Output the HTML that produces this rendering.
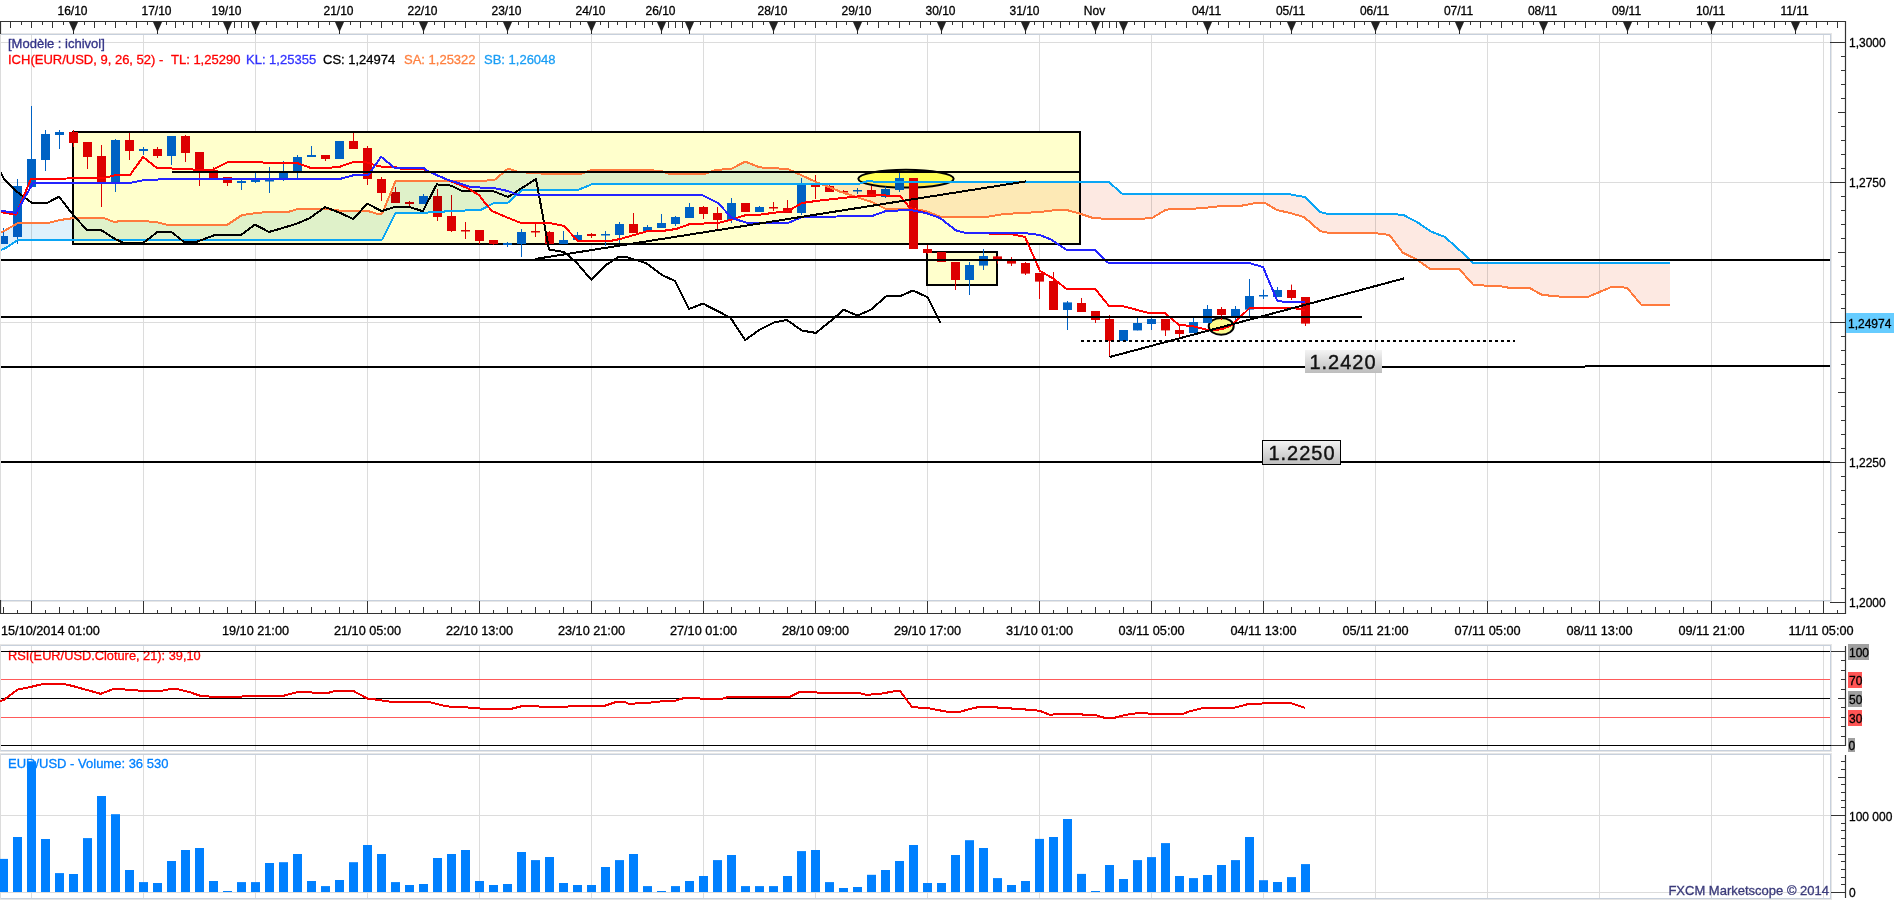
<!DOCTYPE html>
<html><head><meta charset="utf-8"><style>html,body{margin:0;padding:0;background:#fff;width:1903px;height:900px;overflow:hidden;position:relative}</style></head><body>
<svg width="1903" height="900" viewBox="0 0 1903 900" style="position:absolute;left:0;top:0;font-family:'Liberation Sans', sans-serif">
<rect x="0" y="0" width="1903" height="900" fill="#ffffff"/>
<line x1="31.5" y1="35" x2="31.5" y2="600" stroke="#dcdcdc" stroke-width="1"/>
<line x1="143.5" y1="35" x2="143.5" y2="600" stroke="#dcdcdc" stroke-width="1"/>
<line x1="255.5" y1="35" x2="255.5" y2="600" stroke="#dcdcdc" stroke-width="1"/>
<line x1="367.5" y1="35" x2="367.5" y2="600" stroke="#dcdcdc" stroke-width="1"/>
<line x1="479.5" y1="35" x2="479.5" y2="600" stroke="#dcdcdc" stroke-width="1"/>
<line x1="591.5" y1="35" x2="591.5" y2="600" stroke="#dcdcdc" stroke-width="1"/>
<line x1="703.5" y1="35" x2="703.5" y2="600" stroke="#dcdcdc" stroke-width="1"/>
<line x1="815.5" y1="35" x2="815.5" y2="600" stroke="#dcdcdc" stroke-width="1"/>
<line x1="927.5" y1="35" x2="927.5" y2="600" stroke="#dcdcdc" stroke-width="1"/>
<line x1="1039.5" y1="35" x2="1039.5" y2="600" stroke="#dcdcdc" stroke-width="1"/>
<line x1="1151.5" y1="35" x2="1151.5" y2="600" stroke="#dcdcdc" stroke-width="1"/>
<line x1="1263.5" y1="35" x2="1263.5" y2="600" stroke="#dcdcdc" stroke-width="1"/>
<line x1="1375.5" y1="35" x2="1375.5" y2="600" stroke="#dcdcdc" stroke-width="1"/>
<line x1="1487.5" y1="35" x2="1487.5" y2="600" stroke="#dcdcdc" stroke-width="1"/>
<line x1="1599.5" y1="35" x2="1599.5" y2="600" stroke="#dcdcdc" stroke-width="1"/>
<line x1="1711.5" y1="35" x2="1711.5" y2="600" stroke="#dcdcdc" stroke-width="1"/>
<line x1="1823.5" y1="35" x2="1823.5" y2="600" stroke="#dcdcdc" stroke-width="1"/>
<line x1="31.5" y1="646" x2="31.5" y2="750" stroke="#dcdcdc" stroke-width="1"/>
<line x1="143.5" y1="646" x2="143.5" y2="750" stroke="#dcdcdc" stroke-width="1"/>
<line x1="255.5" y1="646" x2="255.5" y2="750" stroke="#dcdcdc" stroke-width="1"/>
<line x1="367.5" y1="646" x2="367.5" y2="750" stroke="#dcdcdc" stroke-width="1"/>
<line x1="479.5" y1="646" x2="479.5" y2="750" stroke="#dcdcdc" stroke-width="1"/>
<line x1="591.5" y1="646" x2="591.5" y2="750" stroke="#dcdcdc" stroke-width="1"/>
<line x1="703.5" y1="646" x2="703.5" y2="750" stroke="#dcdcdc" stroke-width="1"/>
<line x1="815.5" y1="646" x2="815.5" y2="750" stroke="#dcdcdc" stroke-width="1"/>
<line x1="927.5" y1="646" x2="927.5" y2="750" stroke="#dcdcdc" stroke-width="1"/>
<line x1="1039.5" y1="646" x2="1039.5" y2="750" stroke="#dcdcdc" stroke-width="1"/>
<line x1="1151.5" y1="646" x2="1151.5" y2="750" stroke="#dcdcdc" stroke-width="1"/>
<line x1="1263.5" y1="646" x2="1263.5" y2="750" stroke="#dcdcdc" stroke-width="1"/>
<line x1="1375.5" y1="646" x2="1375.5" y2="750" stroke="#dcdcdc" stroke-width="1"/>
<line x1="1487.5" y1="646" x2="1487.5" y2="750" stroke="#dcdcdc" stroke-width="1"/>
<line x1="1599.5" y1="646" x2="1599.5" y2="750" stroke="#dcdcdc" stroke-width="1"/>
<line x1="1711.5" y1="646" x2="1711.5" y2="750" stroke="#dcdcdc" stroke-width="1"/>
<line x1="1823.5" y1="646" x2="1823.5" y2="750" stroke="#dcdcdc" stroke-width="1"/>
<line x1="31.5" y1="755" x2="31.5" y2="898" stroke="#dcdcdc" stroke-width="1"/>
<line x1="143.5" y1="755" x2="143.5" y2="898" stroke="#dcdcdc" stroke-width="1"/>
<line x1="255.5" y1="755" x2="255.5" y2="898" stroke="#dcdcdc" stroke-width="1"/>
<line x1="367.5" y1="755" x2="367.5" y2="898" stroke="#dcdcdc" stroke-width="1"/>
<line x1="479.5" y1="755" x2="479.5" y2="898" stroke="#dcdcdc" stroke-width="1"/>
<line x1="591.5" y1="755" x2="591.5" y2="898" stroke="#dcdcdc" stroke-width="1"/>
<line x1="703.5" y1="755" x2="703.5" y2="898" stroke="#dcdcdc" stroke-width="1"/>
<line x1="815.5" y1="755" x2="815.5" y2="898" stroke="#dcdcdc" stroke-width="1"/>
<line x1="927.5" y1="755" x2="927.5" y2="898" stroke="#dcdcdc" stroke-width="1"/>
<line x1="1039.5" y1="755" x2="1039.5" y2="898" stroke="#dcdcdc" stroke-width="1"/>
<line x1="1151.5" y1="755" x2="1151.5" y2="898" stroke="#dcdcdc" stroke-width="1"/>
<line x1="1263.5" y1="755" x2="1263.5" y2="898" stroke="#dcdcdc" stroke-width="1"/>
<line x1="1375.5" y1="755" x2="1375.5" y2="898" stroke="#dcdcdc" stroke-width="1"/>
<line x1="1487.5" y1="755" x2="1487.5" y2="898" stroke="#dcdcdc" stroke-width="1"/>
<line x1="1599.5" y1="755" x2="1599.5" y2="898" stroke="#dcdcdc" stroke-width="1"/>
<line x1="1711.5" y1="755" x2="1711.5" y2="898" stroke="#dcdcdc" stroke-width="1"/>
<line x1="1823.5" y1="755" x2="1823.5" y2="898" stroke="#dcdcdc" stroke-width="1"/>
<line x1="1" y1="42.5" x2="1830" y2="42.5" stroke="#dcdcdc" stroke-width="1"/>
<line x1="1" y1="182.5" x2="1830" y2="182.5" stroke="#dcdcdc" stroke-width="1"/>
<line x1="1" y1="322.5" x2="1830" y2="322.5" stroke="#dcdcdc" stroke-width="1"/>
<line x1="1" y1="462.5" x2="1830" y2="462.5" stroke="#dcdcdc" stroke-width="1"/>
<line x1="1" y1="815.5" x2="1830" y2="815.5" stroke="#dcdcdc" stroke-width="1"/>
<rect x="73" y="132" width="1007" height="112" fill="#ffffcc"/>
<rect x="927" y="252" width="70" height="33" fill="#ffffcc"/>
<rect x="73" y="132" width="1007" height="112" fill="none" stroke="#000" stroke-width="2"/>
<rect x="927" y="252" width="70" height="33" fill="none" stroke="#000" stroke-width="2"/>
<ellipse cx="906" cy="178.7" rx="47.7" ry="8.9" fill="#ffff55" stroke="#000" stroke-width="2"/>
<ellipse cx="1221.2" cy="326.3" rx="12.5" ry="8.4" fill="#fafa8c" stroke="#000" stroke-width="2"/>
<rect x="3" y="228.0" width="1" height="16.0" fill="#0062c4"/>
<rect x="-1" y="236.0" width="9" height="8.0" fill="#0062c4"/>
<rect x="17" y="179.0" width="1" height="65.0" fill="#0062c4"/>
<rect x="13" y="186.0" width="9" height="51.0" fill="#0062c4"/>
<rect x="31" y="106.0" width="1" height="81.0" fill="#0062c4"/>
<rect x="27" y="159.0" width="9" height="28.0" fill="#0062c4"/>
<rect x="45" y="130.0" width="1" height="41.0" fill="#0062c4"/>
<rect x="41" y="134.0" width="9" height="26.0" fill="#0062c4"/>
<rect x="59" y="130.0" width="1" height="19.0" fill="#0062c4"/>
<rect x="55" y="132.0" width="9" height="3.0" fill="#0062c4"/>
<rect x="73" y="130.0" width="1" height="17.0" fill="#dd0000"/>
<rect x="69" y="132.0" width="9" height="11.0" fill="#dd0000"/>
<rect x="87" y="142.0" width="1" height="27.0" fill="#dd0000"/>
<rect x="83" y="142.0" width="9" height="15.0" fill="#dd0000"/>
<rect x="101" y="145.0" width="1" height="62.0" fill="#dd0000"/>
<rect x="97" y="156.0" width="9" height="27.0" fill="#dd0000"/>
<rect x="115" y="139.0" width="1" height="53.0" fill="#0062c4"/>
<rect x="111" y="140.0" width="9" height="43.0" fill="#0062c4"/>
<rect x="129" y="133.0" width="1" height="27.0" fill="#dd0000"/>
<rect x="125" y="140.0" width="9" height="11.0" fill="#dd0000"/>
<rect x="143" y="147.0" width="1" height="8.0" fill="#0062c4"/>
<rect x="139" y="149.0" width="9" height="2.0" fill="#0062c4"/>
<rect x="157" y="147.0" width="1" height="11.0" fill="#dd0000"/>
<rect x="153" y="149.0" width="9" height="7.0" fill="#dd0000"/>
<rect x="171" y="136.0" width="1" height="29.0" fill="#0062c4"/>
<rect x="167" y="136.0" width="9" height="20.0" fill="#0062c4"/>
<rect x="185" y="135.0" width="1" height="27.0" fill="#dd0000"/>
<rect x="181" y="136.0" width="9" height="17.0" fill="#dd0000"/>
<rect x="199" y="152.0" width="1" height="34.0" fill="#dd0000"/>
<rect x="195" y="152.0" width="9" height="19.0" fill="#dd0000"/>
<rect x="213" y="167.0" width="1" height="11.0" fill="#dd0000"/>
<rect x="209" y="170.0" width="9" height="8.0" fill="#dd0000"/>
<rect x="227" y="177.0" width="1" height="9.0" fill="#dd0000"/>
<rect x="223" y="177.0" width="9" height="6.0" fill="#dd0000"/>
<rect x="241" y="179.0" width="1" height="11.0" fill="#0062c4"/>
<rect x="237" y="181.0" width="9" height="2.0" fill="#0062c4"/>
<rect x="255" y="173.0" width="1" height="10.0" fill="#0062c4"/>
<rect x="251" y="180.0" width="9" height="2.0" fill="#0062c4"/>
<rect x="269" y="167.0" width="1" height="26.0" fill="#0062c4"/>
<rect x="265" y="180.0" width="9" height="1.5" fill="#0062c4"/>
<rect x="283" y="161.0" width="1" height="20.0" fill="#0062c4"/>
<rect x="279" y="173.0" width="9" height="6.0" fill="#0062c4"/>
<rect x="297" y="155.0" width="1" height="23.0" fill="#0062c4"/>
<rect x="293" y="157.0" width="9" height="14.0" fill="#0062c4"/>
<rect x="311" y="146.0" width="1" height="11.0" fill="#0062c4"/>
<rect x="307" y="155.0" width="9" height="2.0" fill="#0062c4"/>
<rect x="325" y="155.0" width="1" height="6.0" fill="#dd0000"/>
<rect x="321" y="155.0" width="9" height="4.0" fill="#dd0000"/>
<rect x="339" y="141.0" width="1" height="18.0" fill="#0062c4"/>
<rect x="335" y="141.0" width="9" height="18.0" fill="#0062c4"/>
<rect x="353" y="133.0" width="1" height="16.0" fill="#dd0000"/>
<rect x="349" y="141.0" width="9" height="8.0" fill="#dd0000"/>
<rect x="367" y="146.0" width="1" height="39.0" fill="#dd0000"/>
<rect x="363" y="148.0" width="9" height="31.0" fill="#dd0000"/>
<rect x="381" y="177.0" width="1" height="24.0" fill="#dd0000"/>
<rect x="377" y="179.0" width="9" height="14.0" fill="#dd0000"/>
<rect x="395" y="187.0" width="1" height="16.0" fill="#dd0000"/>
<rect x="391" y="192.0" width="9" height="11.0" fill="#dd0000"/>
<rect x="409" y="201.0" width="1" height="5.0" fill="#dd0000"/>
<rect x="405" y="202.0" width="9" height="2.0" fill="#dd0000"/>
<rect x="423" y="194.0" width="1" height="10.0" fill="#0062c4"/>
<rect x="419" y="196.0" width="9" height="8.0" fill="#0062c4"/>
<rect x="437" y="189.0" width="1" height="32.0" fill="#dd0000"/>
<rect x="433" y="196.0" width="9" height="21.0" fill="#dd0000"/>
<rect x="451" y="195.0" width="1" height="37.0" fill="#dd0000"/>
<rect x="447" y="216.0" width="9" height="15.0" fill="#dd0000"/>
<rect x="465" y="222.0" width="1" height="17.0" fill="#dd0000"/>
<rect x="461" y="230.0" width="9" height="1.5" fill="#dd0000"/>
<rect x="479" y="230.0" width="1" height="14.0" fill="#dd0000"/>
<rect x="475" y="230.0" width="9" height="11.0" fill="#dd0000"/>
<rect x="493" y="240.0" width="1" height="5.0" fill="#dd0000"/>
<rect x="489" y="240.0" width="9" height="4.0" fill="#dd0000"/>
<rect x="507" y="242.0" width="1" height="5.0" fill="#0062c4"/>
<rect x="503" y="243.0" width="9" height="2.0" fill="#0062c4"/>
<rect x="521" y="229.0" width="1" height="28.0" fill="#0062c4"/>
<rect x="517" y="232.0" width="9" height="12.0" fill="#0062c4"/>
<rect x="535" y="224.0" width="1" height="13.0" fill="#dd0000"/>
<rect x="531" y="231.0" width="9" height="1.5" fill="#dd0000"/>
<rect x="549" y="231.0" width="1" height="13.0" fill="#dd0000"/>
<rect x="545" y="232.0" width="9" height="12.0" fill="#dd0000"/>
<rect x="563" y="231.0" width="1" height="13.0" fill="#0062c4"/>
<rect x="559" y="240.0" width="9" height="4.0" fill="#0062c4"/>
<rect x="577" y="232.0" width="1" height="8.0" fill="#0062c4"/>
<rect x="573" y="235.0" width="9" height="5.0" fill="#0062c4"/>
<rect x="591" y="233.0" width="1" height="5.0" fill="#dd0000"/>
<rect x="587" y="234.0" width="9" height="2.0" fill="#dd0000"/>
<rect x="605" y="231.0" width="1" height="15.0" fill="#0062c4"/>
<rect x="601" y="234.0" width="9" height="1.5" fill="#0062c4"/>
<rect x="619" y="222.0" width="1" height="21.0" fill="#0062c4"/>
<rect x="615" y="224.0" width="9" height="11.0" fill="#0062c4"/>
<rect x="633" y="213.0" width="1" height="20.0" fill="#dd0000"/>
<rect x="629" y="224.0" width="9" height="9.0" fill="#dd0000"/>
<rect x="647" y="225.0" width="1" height="7.0" fill="#0062c4"/>
<rect x="643" y="227.0" width="9" height="5.0" fill="#0062c4"/>
<rect x="661" y="214.0" width="1" height="14.0" fill="#0062c4"/>
<rect x="657" y="223.0" width="9" height="5.0" fill="#0062c4"/>
<rect x="675" y="216.0" width="1" height="10.0" fill="#0062c4"/>
<rect x="671" y="217.0" width="9" height="7.0" fill="#0062c4"/>
<rect x="689" y="203.0" width="1" height="15.0" fill="#0062c4"/>
<rect x="685" y="207.0" width="9" height="11.0" fill="#0062c4"/>
<rect x="703" y="206.0" width="1" height="13.0" fill="#dd0000"/>
<rect x="699" y="207.0" width="9" height="7.0" fill="#dd0000"/>
<rect x="717" y="207.0" width="1" height="22.0" fill="#dd0000"/>
<rect x="713" y="213.0" width="9" height="7.0" fill="#dd0000"/>
<rect x="731" y="198.0" width="1" height="25.0" fill="#0062c4"/>
<rect x="727" y="203.0" width="9" height="17.0" fill="#0062c4"/>
<rect x="745" y="203.0" width="1" height="9.0" fill="#dd0000"/>
<rect x="741" y="203.0" width="9" height="9.0" fill="#dd0000"/>
<rect x="759" y="206.0" width="1" height="6.0" fill="#0062c4"/>
<rect x="755" y="207.0" width="9" height="5.0" fill="#0062c4"/>
<rect x="773" y="202.0" width="1" height="9.0" fill="#dd0000"/>
<rect x="769" y="207.0" width="9" height="1.5" fill="#dd0000"/>
<rect x="787" y="200.0" width="1" height="13.0" fill="#dd0000"/>
<rect x="783" y="208.0" width="9" height="5.0" fill="#dd0000"/>
<rect x="801" y="178.0" width="1" height="37.0" fill="#0062c4"/>
<rect x="797" y="185.0" width="9" height="28.0" fill="#0062c4"/>
<rect x="815" y="175.0" width="1" height="24.0" fill="#dd0000"/>
<rect x="811" y="185.0" width="9" height="2.0" fill="#dd0000"/>
<rect x="829" y="185.0" width="1" height="7.0" fill="#dd0000"/>
<rect x="825" y="186.0" width="9" height="6.0" fill="#dd0000"/>
<rect x="843" y="190.0" width="1" height="3.0" fill="#dd0000"/>
<rect x="839" y="191.0" width="9" height="1.5" fill="#dd0000"/>
<rect x="857" y="188.0" width="1" height="6.0" fill="#0062c4"/>
<rect x="853" y="190.0" width="9" height="1.5" fill="#0062c4"/>
<rect x="871" y="186.0" width="1" height="11.0" fill="#dd0000"/>
<rect x="867" y="190.0" width="9" height="7.0" fill="#dd0000"/>
<rect x="885" y="186.5" width="1" height="11.5" fill="#0062c4"/>
<rect x="881" y="189.0" width="9" height="8.0" fill="#0062c4"/>
<rect x="899" y="172.0" width="1" height="20.0" fill="#0062c4"/>
<rect x="895" y="178.0" width="9" height="12.0" fill="#0062c4"/>
<rect x="913" y="178.0" width="1" height="71.0" fill="#dd0000"/>
<rect x="909" y="178.0" width="9" height="71.0" fill="#dd0000"/>
<rect x="927" y="245.0" width="1" height="9.0" fill="#dd0000"/>
<rect x="923" y="249.0" width="9" height="4.0" fill="#dd0000"/>
<rect x="941" y="252.0" width="1" height="10.0" fill="#dd0000"/>
<rect x="937" y="252.0" width="9" height="10.0" fill="#dd0000"/>
<rect x="955" y="262.0" width="1" height="28.0" fill="#dd0000"/>
<rect x="951" y="262.0" width="9" height="18.0" fill="#dd0000"/>
<rect x="969" y="262.0" width="1" height="33.0" fill="#0062c4"/>
<rect x="965" y="265.0" width="9" height="15.0" fill="#0062c4"/>
<rect x="983" y="249.0" width="1" height="21.0" fill="#0062c4"/>
<rect x="979" y="256.0" width="9" height="9.600000000000023" fill="#0062c4"/>
<rect x="997" y="256.0" width="1" height="7.600000000000023" fill="#dd0000"/>
<rect x="993" y="256.4" width="9" height="3.6000000000000227" fill="#dd0000"/>
<rect x="1011" y="257.0" width="1" height="9.0" fill="#dd0000"/>
<rect x="1007" y="261.0" width="9" height="2.6000000000000227" fill="#dd0000"/>
<rect x="1025" y="262.0" width="1" height="13.0" fill="#dd0000"/>
<rect x="1021" y="263.0" width="9" height="10.600000000000023" fill="#dd0000"/>
<rect x="1039" y="273.0" width="1" height="26.0" fill="#dd0000"/>
<rect x="1035" y="273.0" width="9" height="8.600000000000023" fill="#dd0000"/>
<rect x="1053" y="272.0" width="1" height="38.0" fill="#dd0000"/>
<rect x="1049" y="281.0" width="9" height="29.0" fill="#dd0000"/>
<rect x="1067" y="301.0" width="1" height="29.0" fill="#0062c4"/>
<rect x="1063" y="302.4" width="9" height="7.600000000000023" fill="#0062c4"/>
<rect x="1081" y="298.0" width="1" height="14.0" fill="#dd0000"/>
<rect x="1077" y="303.0" width="9" height="9.0" fill="#dd0000"/>
<rect x="1095" y="311.0" width="1" height="12.0" fill="#dd0000"/>
<rect x="1091" y="311.0" width="9" height="9.0" fill="#dd0000"/>
<rect x="1109" y="315.0" width="1" height="42.0" fill="#dd0000"/>
<rect x="1105" y="319.0" width="9" height="22.0" fill="#dd0000"/>
<rect x="1123" y="330.0" width="1" height="11.0" fill="#0062c4"/>
<rect x="1119" y="330.0" width="9" height="11.0" fill="#0062c4"/>
<rect x="1137" y="318.0" width="1" height="12.399999999999977" fill="#0062c4"/>
<rect x="1133" y="323.0" width="9" height="7.399999999999977" fill="#0062c4"/>
<rect x="1151" y="317.0" width="1" height="13.0" fill="#0062c4"/>
<rect x="1147" y="319.0" width="9" height="5.0" fill="#0062c4"/>
<rect x="1165" y="319.0" width="1" height="17.0" fill="#dd0000"/>
<rect x="1161" y="319.0" width="9" height="11.399999999999977" fill="#dd0000"/>
<rect x="1179" y="324.0" width="1" height="13.0" fill="#dd0000"/>
<rect x="1175" y="330.0" width="9" height="4.0" fill="#dd0000"/>
<rect x="1193" y="318.0" width="1" height="15.0" fill="#0062c4"/>
<rect x="1189" y="322.0" width="9" height="11.0" fill="#0062c4"/>
<rect x="1207" y="305.0" width="1" height="18.0" fill="#0062c4"/>
<rect x="1203" y="309.0" width="9" height="14.0" fill="#0062c4"/>
<rect x="1221" y="307.0" width="1" height="13.0" fill="#dd0000"/>
<rect x="1217" y="309.0" width="9" height="6.0" fill="#dd0000"/>
<rect x="1235" y="306.0" width="1" height="17.0" fill="#0062c4"/>
<rect x="1231" y="309.0" width="9" height="7.0" fill="#0062c4"/>
<rect x="1249" y="279.0" width="1" height="38.0" fill="#0062c4"/>
<rect x="1245" y="296.0" width="9" height="13.600000000000023" fill="#0062c4"/>
<rect x="1263" y="289.6" width="1" height="9.399999999999977" fill="#0062c4"/>
<rect x="1259" y="295.0" width="9" height="1.5" fill="#0062c4"/>
<rect x="1277" y="287.0" width="1" height="10.0" fill="#0062c4"/>
<rect x="1273" y="290.0" width="9" height="7.0" fill="#0062c4"/>
<rect x="1291" y="284.6" width="1" height="15.399999999999977" fill="#dd0000"/>
<rect x="1287" y="290.0" width="9" height="8.0" fill="#dd0000"/>
<rect x="1305" y="297.0" width="1" height="29.0" fill="#dd0000"/>
<rect x="1301" y="297.0" width="9" height="26.600000000000023" fill="#dd0000"/>
<polygon points="0.0,233.0 0.5,232.8 1.0,232.5 1.5,232.2 2.0,232.0 2.5,231.8 3.0,231.5 3.5,231.2 4.0,231.0 5.8,230.0 7.5,229.0 9.2,228.0 11.0,227.0 12.8,226.0 14.5,225.0 16.2,224.0 18.0,223.0 22.0,222.9 26.0,222.9 30.0,222.8 34.0,222.8 38.0,222.8 42.0,222.7 46.0,222.7 50.0,222.6 51.2,222.3 52.5,221.9 53.8,221.6 55.0,221.3 56.2,221.0 57.5,220.7 58.8,220.3 60.0,220.0 61.8,219.8 63.5,219.5 65.2,219.2 67.0,219.0 68.8,218.8 70.5,218.5 72.2,218.2 74.0,218.0 77.8,218.0 81.5,218.0 85.2,218.0 89.0,218.0 92.8,218.0 96.5,218.0 100.2,218.0 104.0,218.0 105.2,218.5 106.5,219.0 107.8,219.5 109.0,220.0 110.2,220.5 111.5,221.0 112.8,221.5 114.0,222.0 115.2,221.8 116.5,221.7 117.8,221.5 119.0,221.3 120.2,221.1 121.5,220.9 122.8,220.8 124.0,220.6 126.2,220.7 128.5,220.7 130.8,220.8 133.0,220.8 135.2,220.8 137.5,220.9 139.8,220.9 142.0,221.0 143.8,221.1 145.5,221.2 147.2,221.4 149.0,221.5 150.8,221.6 152.5,221.8 154.2,221.9 156.0,222.0 157.5,222.4 159.0,222.8 160.5,223.1 162.0,223.5 163.5,223.9 165.0,224.2 166.5,224.6 168.0,225.0 175.4,225.0 182.8,225.0 190.1,225.0 197.5,225.0 204.9,225.0 212.2,225.0 219.6,225.0 227.0,225.0 228.9,223.8 230.8,222.5 232.6,221.2 234.5,220.0 236.4,218.8 238.2,217.5 240.1,216.2 242.0,215.0 243.6,214.8 245.2,214.6 246.9,214.4 248.5,214.2 250.1,213.9 251.8,213.7 253.4,213.5 255.0,213.3 256.9,213.1 258.8,212.9 260.6,212.7 262.5,212.5 264.4,212.3 266.2,212.1 268.1,211.9 270.0,211.7 272.4,211.7 274.8,211.7 277.1,211.7 279.5,211.7 281.9,211.7 284.2,211.7 286.6,211.7 289.0,211.7 290.2,211.3 291.5,210.9 292.8,210.6 294.0,210.2 295.2,209.8 296.5,209.4 297.8,209.1 299.0,208.7 302.2,208.7 305.5,208.8 308.8,208.8 312.0,208.8 315.2,208.9 318.5,208.9 321.8,209.0 325.0,209.0 326.9,209.2 328.8,209.4 330.6,209.6 332.5,209.8 334.4,210.0 336.2,210.2 338.1,210.4 340.0,210.6 343.3,210.6 346.7,210.6 350.0,210.6 353.4,210.6 356.7,210.6 360.0,210.6 363.4,210.6 366.7,210.6 368.2,211.1 369.8,211.6 371.3,212.0 372.8,212.5 374.3,213.0 375.8,213.4 377.4,213.9 378.9,214.4 379.3,214.3 379.7,214.1 380.1,214.0 380.5,213.9 381.0,213.7 381.4,213.6 381.8,213.4 382.2,213.3 383.9,209.3 385.6,205.2 387.2,201.2 388.9,197.2 390.6,193.2 392.2,189.2 393.9,185.1 395.6,181.1 399.1,181.1 402.5,181.1 406.0,181.1 409.5,181.1 412.9,181.1 416.4,181.1 419.8,181.1 423.3,181.1 426.8,181.1 430.2,181.1 433.7,181.1 437.2,181.1 440.7,181.1 444.2,181.1 447.6,181.1 451.1,181.1 454.6,181.1 458.1,181.1 461.5,181.1 465.0,181.1 468.5,181.1 471.9,181.1 475.4,181.1 478.9,181.1 479.2,181.1 479.4,181.1 479.7,181.0 480.0,181.0 480.3,181.0 480.6,181.0 480.8,181.0 481.1,180.9 482.8,180.8 484.4,180.7 486.1,180.6 487.8,180.5 489.4,180.4 491.1,180.2 492.7,180.1 494.4,180.0 496.1,178.6 497.8,177.2 499.5,175.7 501.2,174.3 502.9,172.9 504.6,171.4 506.3,170.0 508.0,168.6 509.2,169.0 510.5,169.4 511.8,169.9 513.0,170.3 514.2,170.7 515.5,171.2 516.8,171.6 518.0,172.0 518.5,172.0 519.0,172.1 519.5,172.1 520.0,172.1 520.5,172.2 521.0,172.2 521.5,172.2 522.0,172.3 525.2,172.5 528.5,172.7 531.8,172.9 535.0,173.1 538.2,173.3 541.5,173.6 544.8,173.8 548.0,174.0 551.8,174.0 555.5,174.0 559.2,174.0 563.0,174.0 566.8,174.0 570.5,174.0 574.2,174.0 578.0,174.0 578.2,174.0 578.5,174.0 578.8,174.0 579.0,174.0 579.2,174.0 579.5,174.0 579.8,174.0 580.0,174.0 581.5,173.5 583.0,173.0 584.5,172.5 586.0,172.0 587.5,171.5 589.0,171.0 590.5,170.5 592.0,170.0 595.5,170.0 599.0,170.0 602.5,170.0 606.0,170.0 609.5,170.0 613.0,170.0 616.5,170.0 620.0,170.0 625.0,170.1 630.0,170.2 635.0,170.2 640.0,170.3 645.0,170.4 650.0,170.4 655.0,170.5 660.0,170.6 661.2,171.0 662.5,171.4 663.8,171.9 665.0,172.3 666.2,172.7 667.5,173.2 668.8,173.6 670.0,174.0 674.2,174.0 678.5,174.0 682.8,174.0 687.0,174.0 691.2,174.0 695.5,174.0 699.8,174.0 704.0,174.0 705.5,173.5 707.0,173.0 708.5,172.5 710.0,172.0 711.5,171.5 713.0,171.0 714.5,170.5 716.0,170.0 718.0,169.8 720.0,169.7 722.0,169.5 724.0,169.3 726.0,169.1 728.0,168.9 730.0,168.8 732.0,168.6 733.6,167.7 735.2,166.8 736.9,166.0 738.5,165.1 740.1,164.2 741.8,163.3 743.4,162.5 745.0,161.6 746.9,162.3 748.8,163.1 750.6,163.8 752.5,164.5 754.4,165.2 756.2,165.9 758.1,166.7 760.0,167.4 763.5,167.6 767.0,167.8 770.5,168.0 774.0,168.2 777.5,168.4 781.0,168.6 784.5,168.8 788.0,169.0 791.5,170.6 795.0,172.2 798.5,173.9 802.0,175.5 805.5,177.1 809.0,178.8 812.5,180.4 816.0,182.0 819.5,183.4 823.0,184.8 823.0,184.2 819.5,184.2 816.0,184.2 812.5,184.2 809.0,184.2 805.5,184.2 802.0,184.2 798.5,184.2 795.0,184.2 791.5,184.2 788.0,184.2 784.5,184.2 781.0,184.2 777.5,184.2 774.0,184.2 770.5,184.2 767.0,184.2 763.5,184.2 760.0,184.2 758.1,184.2 756.2,184.2 754.4,184.2 752.5,184.2 750.6,184.2 748.8,184.2 746.9,184.2 745.0,184.2 743.4,184.2 741.8,184.2 740.1,184.2 738.5,184.2 736.9,184.2 735.2,184.2 733.6,184.2 732.0,184.2 730.0,184.2 728.0,184.2 726.0,184.2 724.0,184.2 722.0,184.2 720.0,184.2 718.0,184.2 716.0,184.2 714.5,184.2 713.0,184.2 711.5,184.2 710.0,184.2 708.5,184.2 707.0,184.2 705.5,184.2 704.0,184.2 699.8,184.2 695.5,184.2 691.2,184.2 687.0,184.2 682.8,184.2 678.5,184.2 674.2,184.2 670.0,184.2 668.8,184.2 667.5,184.2 666.2,184.2 665.0,184.2 663.8,184.2 662.5,184.2 661.2,184.2 660.0,184.2 655.0,184.2 650.0,184.2 645.0,184.2 640.0,184.2 635.0,184.2 630.0,184.2 625.0,184.2 620.0,184.2 616.5,184.2 613.0,184.2 609.5,184.2 606.0,184.2 602.5,184.2 599.0,184.2 595.5,184.2 592.0,184.2 590.5,184.8 589.0,185.4 587.5,186.1 586.0,186.7 584.5,187.3 583.0,187.9 581.5,188.6 580.0,189.2 579.8,189.3 579.5,189.4 579.2,189.5 579.0,189.6 578.8,189.7 578.5,189.8 578.2,189.9 578.0,190.0 574.2,190.0 570.5,190.0 566.8,190.0 563.0,190.0 559.2,190.0 555.5,190.0 551.8,190.0 548.0,190.0 544.8,190.0 541.5,190.0 538.2,190.0 535.0,190.0 531.8,190.0 528.5,190.0 525.2,190.0 522.0,190.0 521.5,190.4 521.0,190.9 520.5,191.3 520.0,191.8 519.5,192.2 519.0,192.7 518.5,193.2 518.0,193.6 516.8,194.7 515.5,195.8 514.2,197.0 513.0,198.1 511.8,199.2 510.5,200.3 509.2,201.5 508.0,202.6 506.3,202.6 504.6,202.7 502.9,202.7 501.2,202.7 499.5,202.7 497.8,202.8 496.1,202.8 494.4,202.8 492.7,203.7 491.1,204.6 489.4,205.4 487.8,206.3 486.1,207.2 484.4,208.1 482.8,208.9 481.1,209.8 480.8,209.8 480.6,209.8 480.3,209.8 480.0,209.8 479.7,209.9 479.4,209.9 479.2,209.9 478.9,209.9 475.4,210.0 471.9,210.2 468.5,210.3 465.0,210.5 461.5,210.6 458.1,210.8 454.6,210.9 451.1,211.1 447.6,211.3 444.2,211.5 440.7,211.7 437.2,211.9 433.7,212.2 430.2,212.4 426.8,212.6 423.3,212.8 419.8,212.8 416.4,212.8 412.9,212.8 409.5,212.8 406.0,212.8 402.5,212.8 399.1,212.8 395.6,212.8 393.9,216.1 392.2,219.5 390.6,222.8 388.9,226.2 387.2,229.5 385.6,232.8 383.9,236.2 382.2,239.5 381.8,239.5 381.4,239.5 381.0,239.5 380.5,239.5 380.1,239.5 379.7,239.5 379.3,239.5 378.9,239.5 377.4,239.5 375.8,239.5 374.3,239.5 372.8,239.5 371.3,239.5 369.8,239.5 368.2,239.5 366.7,239.5 363.4,239.5 360.0,239.5 356.7,239.5 353.4,239.5 350.0,239.5 346.7,239.5 343.3,239.6 340.0,239.6 338.1,239.6 336.2,239.6 334.4,239.6 332.5,239.6 330.6,239.6 328.8,239.6 326.9,239.6 325.0,239.6 321.8,239.6 318.5,239.6 315.2,239.6 312.0,239.6 308.8,239.6 305.5,239.6 302.2,239.6 299.0,239.6 297.8,239.6 296.5,239.6 295.2,239.6 294.0,239.6 292.8,239.6 291.5,239.6 290.2,239.6 289.0,239.6 286.6,239.6 284.2,239.6 281.9,239.6 279.5,239.6 277.1,239.6 274.8,239.6 272.4,239.7 270.0,239.7 268.1,239.7 266.2,239.7 264.4,239.7 262.5,239.7 260.6,239.7 258.8,239.7 256.9,239.7 255.0,239.7 253.4,239.7 251.8,239.7 250.1,239.7 248.5,239.7 246.9,239.7 245.2,239.7 243.6,239.7 242.0,239.7 240.1,239.7 238.2,239.7 236.4,239.7 234.5,239.7 232.6,239.7 230.8,239.7 228.9,239.7 227.0,239.7 219.6,239.7 212.2,239.7 204.9,239.7 197.5,239.8 190.1,239.8 182.8,239.8 175.4,239.8 168.0,239.8 166.5,239.8 165.0,239.8 163.5,239.8 162.0,239.8 160.5,239.8 159.0,239.8 157.5,239.8 156.0,239.8 154.2,239.8 152.5,239.8 150.8,239.8 149.0,239.8 147.2,239.8 145.5,239.8 143.8,239.8 142.0,239.8 139.8,239.8 137.5,239.8 135.2,239.8 133.0,239.8 130.8,239.8 128.5,239.8 126.2,239.9 124.0,239.9 122.8,239.9 121.5,239.9 120.2,239.9 119.0,239.9 117.8,239.9 116.5,239.9 115.2,239.9 114.0,239.9 112.8,239.9 111.5,239.9 110.2,239.9 109.0,239.9 107.8,239.9 106.5,239.9 105.2,239.9 104.0,239.9 100.2,239.9 96.5,239.9 92.8,239.9 89.0,239.9 85.2,239.9 81.5,239.9 77.8,239.9 74.0,239.9 72.2,239.9 70.5,239.9 68.8,239.9 67.0,239.9 65.2,239.9 63.5,239.9 61.8,239.9 60.0,239.9 58.8,239.9 57.5,239.9 56.2,239.9 55.0,239.9 53.8,240.0 52.5,240.0 51.2,240.0 50.0,240.0 46.0,240.0 42.0,240.0 38.0,240.0 34.0,240.0 30.0,240.0 26.0,240.0 22.0,240.0 18.0,240.0 16.2,241.1 14.5,242.2 12.8,243.4 11.0,244.5 9.2,245.6 7.5,246.8 5.8,247.9 4.0,249.0 3.5,249.1 3.0,249.2 2.5,249.4 2.0,249.5 1.5,249.6 1.0,249.8 0.5,249.9 0.0,250.0" fill="#dff1fc" style="mix-blend-mode:multiply"/>
<polygon points="823.0,184.8 826.5,186.1 830.0,187.5 833.5,188.9 837.0,190.2 840.5,191.6 844.0,193.0 845.8,193.6 847.5,194.1 849.2,194.7 851.0,195.2 852.8,195.8 854.5,196.4 856.2,196.9 858.0,197.5 859.2,197.9 860.5,198.3 861.8,198.7 863.0,199.1 864.2,199.5 865.5,199.9 866.8,200.3 868.0,200.7 868.5,200.9 869.0,201.0 869.5,201.2 870.0,201.4 870.5,201.5 871.0,201.7 871.5,201.8 872.0,202.0 872.8,202.4 873.5,202.8 874.2,203.1 875.0,203.5 875.8,203.9 876.5,204.2 877.2,204.6 878.0,205.0 879.0,205.5 880.0,206.0 881.0,206.5 882.0,207.0 883.0,207.5 884.0,208.0 885.0,208.5 886.0,209.0 889.2,209.0 892.5,209.0 895.8,209.0 899.0,209.0 902.2,209.0 905.5,209.0 908.8,209.0 912.0,209.0 913.8,209.2 915.5,209.5 917.2,209.8 919.0,210.0 920.8,210.2 922.5,210.5 924.2,210.8 926.0,211.0 928.0,211.8 930.0,212.6 932.0,213.4 934.0,214.2 936.0,215.0 938.0,215.8 940.0,216.6 942.0,217.4 947.2,217.4 952.5,217.4 957.8,217.4 963.0,217.4 968.2,217.4 973.5,217.4 978.8,217.4 984.0,217.4 986.5,217.0 989.0,216.6 991.5,216.1 994.0,215.7 996.5,215.3 999.0,214.8 1001.5,214.4 1004.0,214.0 1008.5,213.8 1013.0,213.5 1017.5,213.2 1022.0,213.0 1026.5,212.8 1031.0,212.5 1035.5,212.2 1040.0,212.0 1042.5,211.7 1045.0,211.4 1047.5,211.1 1050.0,210.8 1052.5,210.5 1055.0,210.2 1057.5,209.9 1060.0,209.6 1061.0,209.7 1062.0,209.8 1063.0,209.9 1064.0,210.0 1065.0,210.1 1066.0,210.2 1067.0,210.3 1068.0,210.4 1069.5,210.8 1071.0,211.2 1072.5,211.6 1074.0,212.0 1075.5,212.4 1077.0,212.8 1078.5,213.2 1080.0,213.6 1081.6,214.2 1083.2,214.7 1084.9,215.2 1086.5,215.8 1088.1,216.3 1089.8,216.9 1091.4,217.4 1093.0,218.0 1095.0,218.1 1097.0,218.2 1099.0,218.4 1101.0,218.5 1103.0,218.6 1105.0,218.8 1107.0,218.9 1109.0,219.0 1110.6,219.0 1112.2,219.0 1113.9,219.0 1115.5,219.0 1117.1,219.0 1118.8,219.0 1120.4,219.0 1122.0,219.0 1124.0,219.0 1126.0,219.0 1128.0,219.0 1130.0,219.0 1132.0,219.0 1134.0,219.0 1136.0,219.0 1138.0,219.0 1139.6,218.9 1141.2,218.8 1142.9,218.7 1144.5,218.5 1146.1,218.4 1147.8,218.3 1149.4,218.2 1151.0,218.1 1151.1,218.1 1151.2,218.1 1151.4,218.0 1151.5,218.0 1151.6,218.0 1151.8,218.0 1151.9,218.0 1152.0,218.0 1153.8,216.9 1155.5,215.9 1157.2,214.8 1159.0,213.8 1160.8,212.8 1162.5,211.7 1164.2,210.7 1166.0,209.6 1167.8,209.5 1169.5,209.4 1171.2,209.4 1173.0,209.3 1174.8,209.2 1176.5,209.2 1178.2,209.1 1180.0,209.0 1182.5,208.9 1185.0,208.8 1187.5,208.8 1190.0,208.7 1192.5,208.6 1195.0,208.6 1197.5,208.5 1200.0,208.4 1202.8,208.1 1205.5,207.8 1208.2,207.5 1211.0,207.2 1213.8,206.9 1216.5,206.6 1219.2,206.3 1222.0,206.0 1224.5,205.9 1227.0,205.9 1229.5,205.8 1232.0,205.8 1234.5,205.8 1237.0,205.7 1239.5,205.7 1242.0,205.6 1243.8,205.3 1245.5,204.9 1247.2,204.6 1249.0,204.3 1250.8,204.0 1252.5,203.7 1254.2,203.3 1256.0,203.0 1257.1,203.0 1258.2,203.0 1259.4,203.0 1260.5,203.0 1261.6,203.0 1262.8,203.0 1263.9,203.0 1265.0,203.0 1266.5,203.9 1268.0,204.8 1269.5,205.6 1271.0,206.5 1272.5,207.4 1274.0,208.2 1275.5,209.1 1277.0,210.0 1278.6,210.4 1280.2,210.8 1281.9,211.1 1283.5,211.5 1285.1,211.9 1286.8,212.2 1288.4,212.6 1290.0,213.0 1291.8,213.5 1293.5,214.0 1295.2,214.5 1297.0,215.0 1298.8,215.5 1300.5,216.0 1302.2,216.5 1304.0,217.0 1304.1,217.1 1304.2,217.2 1304.4,217.3 1304.5,217.4 1304.6,217.5 1304.8,217.7 1304.9,217.8 1305.0,217.9 1306.9,219.5 1308.8,221.2 1310.6,222.8 1312.5,224.4 1314.4,226.1 1316.2,227.7 1318.1,229.4 1320.0,231.0 1321.0,231.2 1322.0,231.4 1323.0,231.7 1324.0,231.9 1325.0,232.1 1326.0,232.3 1327.0,232.6 1328.0,232.8 1328.1,232.8 1328.2,232.8 1328.4,232.9 1328.5,232.9 1328.6,232.9 1328.8,232.9 1328.9,233.0 1329.0,233.0 1332.9,233.0 1336.8,232.9 1340.6,232.9 1344.5,232.8 1348.4,232.8 1352.2,232.8 1356.1,232.7 1360.0,232.7 1362.0,232.8 1364.0,232.8 1366.0,232.9 1368.0,232.9 1370.0,233.0 1372.0,233.1 1374.0,233.1 1376.0,233.2 1377.7,233.4 1379.4,233.6 1381.1,233.9 1382.8,234.1 1384.4,234.3 1386.1,234.6 1387.8,234.8 1389.5,235.0 1391.2,237.2 1392.9,239.5 1394.6,241.7 1396.2,243.9 1397.9,246.2 1399.6,248.4 1401.3,250.7 1403.0,252.9 1404.8,253.7 1406.5,254.6 1408.2,255.4 1410.0,256.2 1411.8,257.0 1413.5,257.9 1415.2,258.7 1417.0,259.5 1418.6,260.7 1420.2,261.8 1421.8,263.0 1423.3,264.1 1424.9,265.3 1426.5,266.5 1428.1,267.6 1429.7,268.8 1429.9,268.8 1430.2,268.8 1430.4,268.8 1430.6,268.8 1430.8,268.8 1431.0,268.8 1431.3,268.8 1431.5,268.8 1433.2,268.8 1434.9,268.8 1436.6,268.8 1438.2,268.8 1439.9,268.8 1441.6,268.8 1443.3,268.8 1445.0,268.8 1446.0,268.8 1447.0,268.8 1448.0,268.8 1449.0,268.8 1450.0,268.8 1451.0,268.8 1452.0,268.8 1453.0,268.8 1453.8,268.8 1454.5,268.8 1455.2,268.8 1456.0,268.8 1456.8,268.8 1457.5,268.8 1458.2,268.8 1459.0,268.8 1460.2,270.2 1461.5,271.6 1462.8,273.0 1464.0,274.4 1465.2,275.8 1466.5,277.2 1467.8,278.6 1469.0,280.0 1469.5,280.5 1469.9,281.0 1470.3,281.5 1470.8,282.0 1471.2,282.5 1471.7,283.0 1472.1,283.5 1472.6,284.0 1472.7,284.1 1472.8,284.2 1472.9,284.4 1473.0,284.5 1473.2,284.6 1473.3,284.7 1473.4,284.9 1473.5,285.0 1476.9,285.2 1480.4,285.3 1483.8,285.5 1487.2,285.6 1490.7,285.8 1494.1,286.0 1497.6,286.1 1501.0,286.3 1501.9,286.5 1502.8,286.6 1503.6,286.8 1504.5,287.0 1505.4,287.1 1506.2,287.3 1507.1,287.4 1508.0,287.6 1510.6,287.6 1513.2,287.6 1515.9,287.6 1518.5,287.6 1521.1,287.6 1523.8,287.6 1526.4,287.6 1529.0,287.6 1530.6,288.5 1532.2,289.4 1533.9,290.3 1535.5,291.2 1537.1,292.2 1538.8,293.1 1540.4,294.0 1542.0,294.9 1544.8,295.2 1547.7,295.4 1550.5,295.7 1553.3,295.9 1556.1,296.2 1558.9,296.5 1561.8,296.7 1564.6,297.0 1567.5,297.0 1570.4,297.0 1573.3,297.0 1576.2,297.0 1579.1,297.0 1582.0,297.0 1584.9,297.0 1587.8,297.0 1590.8,295.7 1593.8,294.4 1596.9,293.1 1599.9,291.8 1602.9,290.6 1606.0,289.3 1609.0,288.0 1612.0,286.7 1613.9,286.8 1615.8,286.9 1617.6,287.1 1619.5,287.2 1621.4,287.3 1623.2,287.4 1625.1,287.6 1627.0,287.7 1628.8,289.9 1630.6,292.0 1632.4,294.2 1634.2,296.4 1636.0,298.5 1637.8,300.7 1639.6,302.8 1641.4,305.0 1645.0,305.0 1648.6,305.0 1652.1,305.0 1655.7,305.0 1659.3,305.0 1662.8,305.0 1666.4,305.0 1670.0,305.0 1670.0,263.0 1666.4,263.0 1662.8,263.0 1659.3,263.0 1655.7,263.0 1652.1,263.0 1648.6,263.0 1645.0,263.0 1641.4,263.0 1639.6,263.0 1637.8,263.0 1636.0,263.0 1634.2,263.0 1632.4,263.0 1630.6,263.0 1628.8,263.0 1627.0,263.0 1625.1,263.0 1623.2,263.0 1621.4,263.0 1619.5,263.0 1617.6,263.0 1615.8,263.0 1613.9,263.0 1612.0,263.0 1609.0,263.0 1606.0,263.0 1602.9,263.0 1599.9,263.0 1596.9,263.0 1593.8,263.0 1590.8,263.0 1587.8,263.0 1584.9,263.0 1582.0,263.0 1579.1,263.0 1576.2,263.0 1573.3,263.0 1570.4,263.0 1567.5,263.0 1564.6,263.0 1561.8,263.0 1558.9,263.0 1556.1,263.0 1553.3,263.0 1550.5,263.0 1547.7,263.0 1544.8,263.0 1542.0,263.0 1540.4,263.0 1538.8,263.0 1537.1,263.0 1535.5,263.0 1533.9,263.0 1532.2,263.0 1530.6,263.0 1529.0,263.0 1526.4,263.0 1523.8,263.0 1521.1,263.0 1518.5,263.0 1515.9,263.0 1513.2,263.0 1510.6,263.0 1508.0,263.0 1507.1,263.0 1506.2,263.0 1505.4,263.0 1504.5,263.0 1503.6,263.0 1502.8,263.0 1501.9,263.0 1501.0,263.0 1497.6,263.0 1494.1,263.0 1490.7,263.0 1487.2,263.0 1483.8,263.0 1480.4,263.0 1476.9,263.0 1473.5,263.0 1473.4,263.0 1473.3,263.0 1473.2,263.0 1473.0,263.0 1472.9,263.0 1472.8,263.0 1472.7,263.0 1472.6,263.0 1472.1,262.4 1471.7,261.9 1471.2,261.4 1470.8,260.8 1470.3,260.2 1469.9,259.7 1469.5,259.2 1469.0,258.6 1467.8,257.5 1466.5,256.4 1465.2,255.2 1464.0,254.1 1462.8,253.0 1461.5,251.9 1460.2,250.8 1459.0,249.7 1458.2,249.0 1457.5,248.3 1456.8,247.7 1456.0,247.0 1455.2,246.3 1454.5,245.6 1453.8,245.0 1453.0,244.3 1452.0,243.4 1451.0,242.5 1450.0,241.6 1449.0,240.7 1448.0,239.7 1447.0,238.8 1446.0,237.9 1445.0,237.0 1443.3,236.3 1441.6,235.7 1439.9,235.1 1438.2,234.4 1436.6,233.8 1434.9,233.1 1433.2,232.5 1431.5,231.8 1431.3,231.6 1431.0,231.5 1430.8,231.3 1430.6,231.2 1430.4,231.0 1430.2,230.9 1429.9,230.7 1429.7,230.6 1428.1,229.5 1426.5,228.4 1424.9,227.4 1423.3,226.3 1421.8,225.2 1420.2,224.1 1418.6,223.1 1417.0,222.0 1415.2,221.1 1413.5,220.2 1411.8,219.3 1410.0,218.4 1408.2,217.5 1406.5,216.6 1404.8,215.7 1403.0,214.8 1401.3,214.7 1399.6,214.6 1397.9,214.5 1396.2,214.4 1394.6,214.3 1392.9,214.2 1391.2,214.1 1389.5,214.0 1387.8,214.0 1386.1,214.0 1384.4,214.0 1382.8,214.0 1381.1,214.0 1379.4,214.0 1377.7,214.0 1376.0,214.0 1374.0,214.0 1372.0,214.0 1370.0,214.0 1368.0,214.0 1366.0,214.0 1364.0,214.0 1362.0,214.0 1360.0,214.0 1356.1,214.0 1352.2,214.0 1348.4,214.0 1344.5,214.0 1340.6,214.0 1336.8,214.0 1332.9,214.0 1329.0,214.0 1328.9,214.0 1328.8,214.0 1328.6,214.0 1328.5,214.0 1328.4,214.0 1328.2,214.0 1328.1,214.0 1328.0,214.0 1327.0,213.8 1326.0,213.5 1325.0,213.2 1324.0,213.0 1323.0,212.8 1322.0,212.5 1321.0,212.2 1320.0,212.0 1318.1,210.1 1316.2,208.2 1314.4,206.4 1312.5,204.5 1310.6,202.6 1308.8,200.8 1306.9,198.9 1305.0,197.0 1304.9,197.0 1304.8,197.0 1304.6,196.9 1304.5,196.9 1304.4,196.9 1304.2,196.9 1304.1,196.8 1304.0,196.8 1302.2,196.5 1300.5,196.2 1298.8,195.9 1297.0,195.6 1295.2,195.3 1293.5,195.0 1291.8,194.7 1290.0,194.4 1288.4,194.4 1286.8,194.4 1285.1,194.4 1283.5,194.4 1281.9,194.4 1280.2,194.4 1278.6,194.4 1277.0,194.4 1275.5,194.4 1274.0,194.4 1272.5,194.4 1271.0,194.4 1269.5,194.4 1268.0,194.4 1266.5,194.4 1265.0,194.4 1263.9,194.4 1262.8,194.4 1261.6,194.4 1260.5,194.4 1259.4,194.4 1258.2,194.4 1257.1,194.4 1256.0,194.4 1254.2,194.4 1252.5,194.4 1250.8,194.4 1249.0,194.4 1247.2,194.4 1245.5,194.4 1243.8,194.4 1242.0,194.4 1239.5,194.4 1237.0,194.4 1234.5,194.4 1232.0,194.4 1229.5,194.4 1227.0,194.4 1224.5,194.4 1222.0,194.4 1219.2,194.4 1216.5,194.4 1213.8,194.4 1211.0,194.4 1208.2,194.4 1205.5,194.4 1202.8,194.4 1200.0,194.4 1197.5,194.4 1195.0,194.4 1192.5,194.4 1190.0,194.4 1187.5,194.4 1185.0,194.4 1182.5,194.4 1180.0,194.4 1178.2,194.4 1176.5,194.4 1174.8,194.4 1173.0,194.4 1171.2,194.4 1169.5,194.4 1167.8,194.4 1166.0,194.4 1164.2,194.4 1162.5,194.4 1160.8,194.4 1159.0,194.4 1157.2,194.4 1155.5,194.4 1153.8,194.4 1152.0,194.4 1151.9,194.4 1151.8,194.4 1151.6,194.4 1151.5,194.4 1151.4,194.4 1151.2,194.4 1151.1,194.4 1151.0,194.4 1149.4,194.4 1147.8,194.3 1146.1,194.3 1144.5,194.2 1142.9,194.2 1141.2,194.1 1139.6,194.1 1138.0,194.0 1136.0,194.0 1134.0,193.9 1132.0,193.9 1130.0,193.8 1128.0,193.8 1126.0,193.7 1124.0,193.7 1122.0,193.6 1120.4,192.2 1118.8,190.8 1117.1,189.3 1115.5,187.9 1113.9,186.5 1112.2,185.0 1110.6,183.6 1109.0,182.2 1107.0,182.2 1105.0,182.2 1103.0,182.2 1101.0,182.2 1099.0,182.2 1097.0,182.2 1095.0,182.2 1093.0,182.2 1091.4,182.2 1089.8,182.2 1088.1,182.2 1086.5,182.2 1084.9,182.2 1083.2,182.2 1081.6,182.2 1080.0,182.2 1078.5,182.2 1077.0,182.2 1075.5,182.2 1074.0,182.2 1072.5,182.2 1071.0,182.2 1069.5,182.2 1068.0,182.2 1067.0,182.2 1066.0,182.2 1065.0,182.2 1064.0,182.2 1063.0,182.2 1062.0,182.2 1061.0,182.2 1060.0,182.2 1057.5,182.2 1055.0,182.2 1052.5,182.2 1050.0,182.1 1047.5,182.1 1045.0,182.1 1042.5,182.1 1040.0,182.1 1035.5,182.1 1031.0,182.1 1026.5,182.1 1022.0,182.1 1017.5,182.1 1013.0,182.1 1008.5,182.1 1004.0,182.1 1001.5,182.1 999.0,182.1 996.5,182.1 994.0,182.1 991.5,182.1 989.0,182.1 986.5,182.1 984.0,182.1 978.8,182.1 973.5,182.1 968.2,182.1 963.0,182.1 957.8,182.1 952.5,182.1 947.2,182.1 942.0,182.1 940.0,182.1 938.0,182.1 936.0,182.1 934.0,182.0 932.0,182.0 930.0,182.0 928.0,182.0 926.0,182.0 924.2,182.0 922.5,182.0 920.8,182.0 919.0,182.0 917.2,182.0 915.5,182.0 913.8,182.0 912.0,182.0 908.8,182.0 905.5,182.0 902.2,182.0 899.0,182.0 895.8,182.0 892.5,182.0 889.2,182.0 886.0,182.0 885.0,182.0 884.0,182.0 883.0,182.0 882.0,182.0 881.0,182.0 880.0,182.0 879.0,182.0 878.0,182.0 877.2,181.9 876.5,181.8 875.8,181.8 875.0,181.7 874.2,181.6 873.5,181.6 872.8,181.5 872.0,181.4 871.5,181.3 871.0,181.3 870.5,181.2 870.0,181.2 869.5,181.2 869.0,181.1 868.5,181.1 868.0,181.0 866.8,181.4 865.5,181.8 864.2,182.2 863.0,182.6 861.8,183.0 860.5,183.4 859.2,183.8 858.0,184.2 856.2,184.2 854.5,184.2 852.8,184.2 851.0,184.2 849.2,184.2 847.5,184.2 845.8,184.2 844.0,184.2 840.5,184.2 837.0,184.2 833.5,184.2 830.0,184.2 826.5,184.2 823.0,184.2" fill="#fde9e2" style="mix-blend-mode:multiply"/>
<polyline points="0.0,233.0 4.0,231.0 18.0,223.0 50.0,222.6 60.0,220.0 74.0,218.0 104.0,218.0 114.0,222.0 124.0,220.6 142.0,221.0 156.0,222.0 168.0,225.0 227.0,225.0 242.0,215.0 255.0,213.3 270.0,211.7 289.0,211.7 299.0,208.7 325.0,209.0 340.0,210.6 366.7,210.6 378.9,214.4 382.2,213.3 395.6,181.1 478.9,181.1 494.4,180.0 508.0,168.6 518.0,172.0 548.0,174.0 580.0,174.0 592.0,170.0 620.0,170.0 660.0,170.6 670.0,174.0 704.0,174.0 716.0,170.0 732.0,168.6 745.0,161.6 760.0,167.4 788.0,169.0 816.0,182.0 844.0,193.0 872.0,202.0 886.0,209.0 912.0,209.0 926.0,211.0 942.0,217.4 984.0,217.4 1004.0,214.0 1040.0,212.0 1060.0,209.6 1068.0,210.4 1080.0,213.6 1093.0,218.0 1109.0,219.0 1138.0,219.0 1152.0,218.0 1166.0,209.6 1180.0,209.0 1200.0,208.4 1222.0,206.0 1242.0,205.6 1256.0,203.0 1265.0,203.0 1277.0,210.0 1290.0,213.0 1304.0,217.0 1320.0,231.0 1329.0,233.0 1360.0,232.7 1376.0,233.2 1389.5,235.0 1403.0,252.9 1417.0,259.5 1429.7,268.8 1459.0,268.8 1473.5,285.0 1501.0,286.3 1508.0,287.6 1529.0,287.6 1542.0,294.9 1564.6,297.0 1587.8,297.0 1612.0,286.7 1627.0,287.7 1641.4,305.0 1670.0,305.0" fill="none" stroke="#ff7a3d" stroke-width="2" stroke-linejoin="round" shape-rendering="crispEdges"/>
<polyline points="0.0,250.0 4.0,249.0 18.0,240.0 382.2,239.5 395.6,212.8 423.3,212.8 451.1,211.1 481.1,209.8 494.4,202.8 508.0,202.6 522.0,190.0 578.0,190.0 592.0,184.2 858.0,184.2 868.0,181.0 878.0,182.0 1109.0,182.2 1122.0,193.6 1151.0,194.4 1290.0,194.4 1305.0,197.0 1320.0,212.0 1328.0,214.0 1389.5,214.0 1403.0,214.8 1417.0,222.0 1431.5,231.8 1445.0,237.0 1453.0,244.3 1469.0,258.6 1472.6,263.0 1670.0,263.0" fill="none" stroke="#0aa5f5" stroke-width="2" stroke-linejoin="round" shape-rendering="crispEdges"/>
<polyline points="0.0,171.0 4.0,179.0 16.0,191.0 32.0,203.0 47.0,203.0 59.0,196.6 74.0,216.0 87.0,230.0 101.0,230.0 115.0,239.0 124.0,243.0 143.0,243.0 158.0,231.6 171.0,231.6 184.0,242.0 196.0,242.0 215.0,235.0 241.0,235.0 255.0,224.6 269.0,232.0 296.0,224.0 310.0,218.0 325.0,207.0 340.0,212.8 353.3,219.1 367.2,203.6 381.7,211.1 394.4,207.0 408.9,206.7 422.8,211.3 436.7,184.4 451.1,185.6 462.2,191.1 493.3,191.1 508.0,197.0 536.0,179.0 549.0,249.6 564.0,252.0 576.0,262.0 591.4,280.0 606.0,265.0 619.0,256.6 626.0,257.0 646.0,263.0 662.0,275.0 675.0,281.0 689.0,309.0 703.0,303.6 720.0,312.3 730.7,318.0 745.2,340.1 759.1,330.0 774.2,322.4 786.8,319.9 802.0,330.6 815.9,332.9 829.7,321.8 843.6,309.8 857.5,315.5 870.7,309.8 886.5,296.0 900.3,296.0 913.0,290.5 927.5,297.2 940.7,323.1" fill="none" stroke="#000000" stroke-width="2" stroke-linejoin="round" shape-rendering="crispEdges"/>
<polyline points="0.0,212.0 16.0,214.6 31.0,179.0 104.0,178.0 116.0,175.0 130.0,175.0 143.0,157.0 157.0,168.0 186.0,169.0 200.0,170.0 212.0,170.0 228.0,162.0 297.0,163.0 311.0,168.0 325.0,168.0 339.0,167.0 354.4,161.7 364.4,161.7 376.7,165.6 382.2,166.7 395.6,167.2 402.2,169.1 423.3,169.1 428.9,171.7 446.7,179.4 467.8,188.3 478.9,195.0 484.4,202.2 492.2,211.1 506.0,217.0 520.0,222.6 548.0,222.6 564.0,226.0 578.0,241.0 610.0,241.0 620.0,239.0 634.0,235.0 648.0,231.0 662.0,231.0 676.0,229.0 690.0,224.0 718.0,223.0 732.0,219.4 746.0,215.0 760.0,214.6 788.0,211.0 802.0,203.0 816.0,201.0 852.0,197.0 872.0,195.0 900.0,196.0 910.0,208.0 926.0,213.0 940.0,218.0 956.0,230.4 966.0,233.0 1011.0,234.0 1025.0,237.0 1040.0,271.0 1054.0,279.0 1066.0,288.6 1095.0,288.6 1109.0,306.0 1122.0,306.0 1149.0,313.0 1165.0,313.0 1179.0,325.0 1192.0,326.0 1208.0,330.0 1222.0,329.4 1232.0,325.0 1250.0,307.6 1291.0,307.6 1305.0,310.0" fill="none" stroke="#ff0000" stroke-width="2" stroke-linejoin="round" shape-rendering="crispEdges"/>
<polyline points="0.0,210.6 16.0,213.0 33.0,183.0 130.0,183.0 144.0,180.0 172.0,179.0 340.0,178.9 354.4,175.0 368.3,175.0 381.1,156.7 394.4,167.8 423.3,167.8 428.9,171.7 446.7,179.4 471.1,187.2 493.3,188.0 508.0,191.0 518.0,195.0 702.0,195.0 718.0,203.0 732.0,218.0 746.0,222.6 788.0,223.0 802.0,217.0 872.0,216.0 886.0,211.0 910.0,210.0 926.0,213.0 940.0,218.0 956.0,230.4 966.0,233.0 1024.0,233.0 1040.0,235.0 1052.0,240.0 1066.0,249.6 1095.0,249.6 1108.0,262.6 1249.0,263.0 1263.0,267.0 1277.0,300.4 1284.0,302.0 1305.0,302.0" fill="none" stroke="#2424ff" stroke-width="2" stroke-linejoin="round" shape-rendering="crispEdges"/>
<line x1="172" y1="172" x2="1081" y2="172" stroke="#000" stroke-width="2"/>
<line x1="0" y1="260" x2="1830" y2="260" stroke="#000" stroke-width="2"/>
<line x1="0" y1="317" x2="1362" y2="317" stroke="#000" stroke-width="2"/>
<line x1="0" y1="367" x2="1585" y2="367" stroke="#000" stroke-width="2"/>
<line x1="1585" y1="366" x2="1830" y2="366" stroke="#000" stroke-width="2"/>
<line x1="0" y1="462" x2="1830" y2="462" stroke="#000" stroke-width="2"/>
<line shape-rendering="crispEdges" x1="1081" y1="341.5" x2="1515" y2="341" stroke="#000" stroke-width="2" stroke-dasharray="3,3"/>
<line shape-rendering="crispEdges" x1="535" y1="259" x2="1026" y2="181.4" stroke="#000" stroke-width="2"/>
<line shape-rendering="crispEdges" x1="1109.6" y1="357" x2="1404" y2="278.4" stroke="#000" stroke-width="2"/>
<defs><linearGradient id="lg" x1="0" y1="0" x2="0" y2="1"><stop offset="0" stop-color="#f4f4f4"/><stop offset="1" stop-color="#bdbdbd"/></linearGradient></defs>
<rect x="1305" y="350" width="77" height="23" fill="url(#lg)"/>
<text x="1343" y="369" font-size="20" letter-spacing="1" text-anchor="middle" fill="#111" stroke="#111" stroke-width="0.4">1.2420</text>
<rect x="1262.5" y="440.5" width="78" height="24" fill="url(#lg)" stroke="#000" stroke-width="1"/>
<text x="1302" y="460" font-size="20" letter-spacing="1" text-anchor="middle" fill="#111" stroke="#111" stroke-width="0.4">1.2250</text>
<rect x="0" y="33" width="1832" height="1" fill="#e6e6e6"/>
<rect x="0" y="601" width="1832" height="1" fill="#e6e6e6"/>
<rect x="1831" y="34" width="1" height="567" fill="#e6e6e6"/>
<rect x="0" y="34" width="1" height="567" fill="#dcdcdc"/>
<rect x="1" y="34" width="1830" height="1" fill="#c7d0dc"/>
<rect x="1" y="600" width="1830" height="1" fill="#c7d0dc"/>
<rect x="1830" y="34" width="1" height="567" fill="#c7d0dc"/>
<rect x="0" y="644" width="1832" height="1" fill="#e6e6e6"/>
<rect x="0" y="751" width="1832" height="1" fill="#e6e6e6"/>
<rect x="1831" y="645" width="1" height="106" fill="#e6e6e6"/>
<rect x="0" y="645" width="1" height="106" fill="#dcdcdc"/>
<rect x="1" y="645" width="1830" height="1" fill="#c7d0dc"/>
<rect x="1" y="750" width="1830" height="1" fill="#c7d0dc"/>
<rect x="1830" y="645" width="1" height="106" fill="#c7d0dc"/>
<rect x="0" y="753" width="1832" height="1" fill="#e6e6e6"/>
<rect x="0" y="899" width="1832" height="1" fill="#e6e6e6"/>
<rect x="1831" y="754" width="1" height="145" fill="#e6e6e6"/>
<rect x="0" y="754" width="1" height="145" fill="#dcdcdc"/>
<rect x="1" y="754" width="1830" height="1" fill="#c7d0dc"/>
<rect x="1" y="898" width="1830" height="1" fill="#c7d0dc"/>
<rect x="1830" y="754" width="1" height="145" fill="#c7d0dc"/>
<line x1="0" y1="21.5" x2="1846" y2="21.5" stroke="#333333" stroke-width="1.2"/>
<line x1="0.5" y1="21" x2="0.5" y2="34" stroke="#333333" stroke-width="1.2"/>
<polygon points="69.0,22 78.0,22 74.0,31 73.0,31" fill="#222"/>
<line x1="73.5" y1="22" x2="73.5" y2="34" stroke="#222" stroke-width="1"/>
<text x="72.5" y="15" font-size="12" text-anchor="middle" fill="#000" stroke="#000" stroke-width="0.3">16/10</text>
<polygon points="153.0,22 162.0,22 158.0,31 157.0,31" fill="#222"/>
<line x1="157.5" y1="22" x2="157.5" y2="34" stroke="#222" stroke-width="1"/>
<text x="156.5" y="15" font-size="12" text-anchor="middle" fill="#000" stroke="#000" stroke-width="0.3">17/10</text>
<polygon points="223.0,22 232.0,22 228.0,31 227.0,31" fill="#222"/>
<line x1="227.5" y1="22" x2="227.5" y2="34" stroke="#222" stroke-width="1"/>
<text x="226.5" y="15" font-size="12" text-anchor="middle" fill="#000" stroke="#000" stroke-width="0.3">19/10</text>
<polygon points="251.0,22 260.0,22 256.0,31 255.0,31" fill="#222"/>
<line x1="255.5" y1="22" x2="255.5" y2="34" stroke="#222" stroke-width="1"/>
<polygon points="335.0,22 344.0,22 340.0,31 339.0,31" fill="#222"/>
<line x1="339.5" y1="22" x2="339.5" y2="34" stroke="#222" stroke-width="1"/>
<text x="338.5" y="15" font-size="12" text-anchor="middle" fill="#000" stroke="#000" stroke-width="0.3">21/10</text>
<polygon points="419.0,22 428.0,22 424.0,31 423.0,31" fill="#222"/>
<line x1="423.5" y1="22" x2="423.5" y2="34" stroke="#222" stroke-width="1"/>
<text x="422.5" y="15" font-size="12" text-anchor="middle" fill="#000" stroke="#000" stroke-width="0.3">22/10</text>
<polygon points="503.0,22 512.0,22 508.0,31 507.0,31" fill="#222"/>
<line x1="507.5" y1="22" x2="507.5" y2="34" stroke="#222" stroke-width="1"/>
<text x="506.5" y="15" font-size="12" text-anchor="middle" fill="#000" stroke="#000" stroke-width="0.3">23/10</text>
<polygon points="587.0,22 596.0,22 592.0,31 591.0,31" fill="#222"/>
<line x1="591.5" y1="22" x2="591.5" y2="34" stroke="#222" stroke-width="1"/>
<text x="590.5" y="15" font-size="12" text-anchor="middle" fill="#000" stroke="#000" stroke-width="0.3">24/10</text>
<polygon points="657.0,22 666.0,22 662.0,31 661.0,31" fill="#222"/>
<line x1="661.5" y1="22" x2="661.5" y2="34" stroke="#222" stroke-width="1"/>
<text x="660.5" y="15" font-size="12" text-anchor="middle" fill="#000" stroke="#000" stroke-width="0.3">26/10</text>
<polygon points="685.0,22 694.0,22 690.0,31 689.0,31" fill="#222"/>
<line x1="689.5" y1="22" x2="689.5" y2="34" stroke="#222" stroke-width="1"/>
<polygon points="769.0,22 778.0,22 774.0,31 773.0,31" fill="#222"/>
<line x1="773.5" y1="22" x2="773.5" y2="34" stroke="#222" stroke-width="1"/>
<text x="772.5" y="15" font-size="12" text-anchor="middle" fill="#000" stroke="#000" stroke-width="0.3">28/10</text>
<polygon points="853.0,22 862.0,22 858.0,31 857.0,31" fill="#222"/>
<line x1="857.5" y1="22" x2="857.5" y2="34" stroke="#222" stroke-width="1"/>
<text x="856.5" y="15" font-size="12" text-anchor="middle" fill="#000" stroke="#000" stroke-width="0.3">29/10</text>
<polygon points="937.0,22 946.0,22 942.0,31 941.0,31" fill="#222"/>
<line x1="941.5" y1="22" x2="941.5" y2="34" stroke="#222" stroke-width="1"/>
<text x="940.5" y="15" font-size="12" text-anchor="middle" fill="#000" stroke="#000" stroke-width="0.3">30/10</text>
<polygon points="1021.0,22 1030.0,22 1026.0,31 1025.0,31" fill="#222"/>
<line x1="1025.5" y1="22" x2="1025.5" y2="34" stroke="#222" stroke-width="1"/>
<text x="1024.5" y="15" font-size="12" text-anchor="middle" fill="#000" stroke="#000" stroke-width="0.3">31/10</text>
<polygon points="1091.0,22 1100.0,22 1096.0,31 1095.0,31" fill="#222"/>
<line x1="1095.5" y1="22" x2="1095.5" y2="34" stroke="#222" stroke-width="1"/>
<text x="1094.5" y="15" font-size="12" text-anchor="middle" fill="#000" stroke="#000" stroke-width="0.3">Nov</text>
<polygon points="1119.0,22 1128.0,22 1124.0,31 1123.0,31" fill="#222"/>
<line x1="1123.5" y1="22" x2="1123.5" y2="34" stroke="#222" stroke-width="1"/>
<polygon points="1203.0,22 1212.0,22 1208.0,31 1207.0,31" fill="#222"/>
<line x1="1207.5" y1="22" x2="1207.5" y2="34" stroke="#222" stroke-width="1"/>
<text x="1206.5" y="15" font-size="12" text-anchor="middle" fill="#000" stroke="#000" stroke-width="0.3">04/11</text>
<polygon points="1287.0,22 1296.0,22 1292.0,31 1291.0,31" fill="#222"/>
<line x1="1291.5" y1="22" x2="1291.5" y2="34" stroke="#222" stroke-width="1"/>
<text x="1290.5" y="15" font-size="12" text-anchor="middle" fill="#000" stroke="#000" stroke-width="0.3">05/11</text>
<polygon points="1371.0,22 1380.0,22 1376.0,31 1375.0,31" fill="#222"/>
<line x1="1375.5" y1="22" x2="1375.5" y2="34" stroke="#222" stroke-width="1"/>
<text x="1374.5" y="15" font-size="12" text-anchor="middle" fill="#000" stroke="#000" stroke-width="0.3">06/11</text>
<polygon points="1455.0,22 1464.0,22 1460.0,31 1459.0,31" fill="#222"/>
<line x1="1459.5" y1="22" x2="1459.5" y2="34" stroke="#222" stroke-width="1"/>
<text x="1458.5" y="15" font-size="12" text-anchor="middle" fill="#000" stroke="#000" stroke-width="0.3">07/11</text>
<polygon points="1539.0,22 1548.0,22 1544.0,31 1543.0,31" fill="#222"/>
<line x1="1543.5" y1="22" x2="1543.5" y2="34" stroke="#222" stroke-width="1"/>
<text x="1542.5" y="15" font-size="12" text-anchor="middle" fill="#000" stroke="#000" stroke-width="0.3">08/11</text>
<polygon points="1623.0,22 1632.0,22 1628.0,31 1627.0,31" fill="#222"/>
<line x1="1627.5" y1="22" x2="1627.5" y2="34" stroke="#222" stroke-width="1"/>
<text x="1626.5" y="15" font-size="12" text-anchor="middle" fill="#000" stroke="#000" stroke-width="0.3">09/11</text>
<polygon points="1707.0,22 1716.0,22 1712.0,31 1711.0,31" fill="#222"/>
<line x1="1711.5" y1="22" x2="1711.5" y2="34" stroke="#222" stroke-width="1"/>
<text x="1710.5" y="15" font-size="12" text-anchor="middle" fill="#000" stroke="#000" stroke-width="0.3">10/11</text>
<polygon points="1791.0,22 1800.0,22 1796.0,31 1795.0,31" fill="#222"/>
<line x1="1795.5" y1="22" x2="1795.5" y2="34" stroke="#222" stroke-width="1"/>
<text x="1794.5" y="15" font-size="12" text-anchor="middle" fill="#000" stroke="#000" stroke-width="0.3">11/11</text>
<line x1="84.5" y1="22" x2="84.5" y2="25" stroke="#333333" stroke-width="1"/>
<line x1="94.5" y1="22" x2="94.5" y2="28" stroke="#333333" stroke-width="1"/>
<line x1="105.5" y1="22" x2="105.5" y2="25" stroke="#333333" stroke-width="1"/>
<line x1="115.5" y1="22" x2="115.5" y2="28" stroke="#333333" stroke-width="1"/>
<line x1="126.5" y1="22" x2="126.5" y2="25" stroke="#333333" stroke-width="1"/>
<line x1="136.5" y1="22" x2="136.5" y2="28" stroke="#333333" stroke-width="1"/>
<line x1="147.5" y1="22" x2="147.5" y2="25" stroke="#333333" stroke-width="1"/>
<line x1="166.5" y1="22" x2="166.5" y2="25" stroke="#333333" stroke-width="1"/>
<line x1="175.5" y1="22" x2="175.5" y2="28" stroke="#333333" stroke-width="1"/>
<line x1="183.5" y1="22" x2="183.5" y2="25" stroke="#333333" stroke-width="1"/>
<line x1="192.5" y1="22" x2="192.5" y2="28" stroke="#333333" stroke-width="1"/>
<line x1="201.5" y1="22" x2="201.5" y2="25" stroke="#333333" stroke-width="1"/>
<line x1="209.5" y1="22" x2="209.5" y2="28" stroke="#333333" stroke-width="1"/>
<line x1="218.5" y1="22" x2="218.5" y2="25" stroke="#333333" stroke-width="1"/>
<line x1="234.5" y1="22" x2="234.5" y2="28" stroke="#333333" stroke-width="1"/>
<line x1="241.5" y1="22" x2="241.5" y2="28" stroke="#333333" stroke-width="1"/>
<line x1="248.5" y1="22" x2="248.5" y2="28" stroke="#333333" stroke-width="1"/>
<line x1="266.5" y1="22" x2="266.5" y2="25" stroke="#333333" stroke-width="1"/>
<line x1="276.5" y1="22" x2="276.5" y2="28" stroke="#333333" stroke-width="1"/>
<line x1="287.5" y1="22" x2="287.5" y2="25" stroke="#333333" stroke-width="1"/>
<line x1="297.5" y1="22" x2="297.5" y2="28" stroke="#333333" stroke-width="1"/>
<line x1="308.5" y1="22" x2="308.5" y2="25" stroke="#333333" stroke-width="1"/>
<line x1="318.5" y1="22" x2="318.5" y2="28" stroke="#333333" stroke-width="1"/>
<line x1="329.5" y1="22" x2="329.5" y2="25" stroke="#333333" stroke-width="1"/>
<line x1="350.5" y1="22" x2="350.5" y2="25" stroke="#333333" stroke-width="1"/>
<line x1="360.5" y1="22" x2="360.5" y2="28" stroke="#333333" stroke-width="1"/>
<line x1="371.5" y1="22" x2="371.5" y2="25" stroke="#333333" stroke-width="1"/>
<line x1="381.5" y1="22" x2="381.5" y2="28" stroke="#333333" stroke-width="1"/>
<line x1="392.5" y1="22" x2="392.5" y2="25" stroke="#333333" stroke-width="1"/>
<line x1="402.5" y1="22" x2="402.5" y2="28" stroke="#333333" stroke-width="1"/>
<line x1="413.5" y1="22" x2="413.5" y2="25" stroke="#333333" stroke-width="1"/>
<line x1="434.5" y1="22" x2="434.5" y2="25" stroke="#333333" stroke-width="1"/>
<line x1="444.5" y1="22" x2="444.5" y2="28" stroke="#333333" stroke-width="1"/>
<line x1="455.5" y1="22" x2="455.5" y2="25" stroke="#333333" stroke-width="1"/>
<line x1="465.5" y1="22" x2="465.5" y2="28" stroke="#333333" stroke-width="1"/>
<line x1="476.5" y1="22" x2="476.5" y2="25" stroke="#333333" stroke-width="1"/>
<line x1="486.5" y1="22" x2="486.5" y2="28" stroke="#333333" stroke-width="1"/>
<line x1="497.5" y1="22" x2="497.5" y2="25" stroke="#333333" stroke-width="1"/>
<line x1="518.5" y1="22" x2="518.5" y2="25" stroke="#333333" stroke-width="1"/>
<line x1="528.5" y1="22" x2="528.5" y2="28" stroke="#333333" stroke-width="1"/>
<line x1="538.5" y1="22" x2="538.5" y2="25" stroke="#333333" stroke-width="1"/>
<line x1="549.5" y1="22" x2="549.5" y2="28" stroke="#333333" stroke-width="1"/>
<line x1="559.5" y1="22" x2="559.5" y2="25" stroke="#333333" stroke-width="1"/>
<line x1="570.5" y1="22" x2="570.5" y2="28" stroke="#333333" stroke-width="1"/>
<line x1="580.5" y1="22" x2="580.5" y2="25" stroke="#333333" stroke-width="1"/>
<line x1="600.5" y1="22" x2="600.5" y2="25" stroke="#333333" stroke-width="1"/>
<line x1="608.5" y1="22" x2="608.5" y2="28" stroke="#333333" stroke-width="1"/>
<line x1="617.5" y1="22" x2="617.5" y2="25" stroke="#333333" stroke-width="1"/>
<line x1="626.5" y1="22" x2="626.5" y2="28" stroke="#333333" stroke-width="1"/>
<line x1="635.5" y1="22" x2="635.5" y2="25" stroke="#333333" stroke-width="1"/>
<line x1="644.5" y1="22" x2="644.5" y2="28" stroke="#333333" stroke-width="1"/>
<line x1="652.5" y1="22" x2="652.5" y2="25" stroke="#333333" stroke-width="1"/>
<line x1="668.5" y1="22" x2="668.5" y2="28" stroke="#333333" stroke-width="1"/>
<line x1="675.5" y1="22" x2="675.5" y2="28" stroke="#333333" stroke-width="1"/>
<line x1="682.5" y1="22" x2="682.5" y2="28" stroke="#333333" stroke-width="1"/>
<line x1="700.5" y1="22" x2="700.5" y2="25" stroke="#333333" stroke-width="1"/>
<line x1="710.5" y1="22" x2="710.5" y2="28" stroke="#333333" stroke-width="1"/>
<line x1="721.5" y1="22" x2="721.5" y2="25" stroke="#333333" stroke-width="1"/>
<line x1="731.5" y1="22" x2="731.5" y2="28" stroke="#333333" stroke-width="1"/>
<line x1="742.5" y1="22" x2="742.5" y2="25" stroke="#333333" stroke-width="1"/>
<line x1="752.5" y1="22" x2="752.5" y2="28" stroke="#333333" stroke-width="1"/>
<line x1="763.5" y1="22" x2="763.5" y2="25" stroke="#333333" stroke-width="1"/>
<line x1="784.5" y1="22" x2="784.5" y2="25" stroke="#333333" stroke-width="1"/>
<line x1="794.5" y1="22" x2="794.5" y2="28" stroke="#333333" stroke-width="1"/>
<line x1="805.5" y1="22" x2="805.5" y2="25" stroke="#333333" stroke-width="1"/>
<line x1="815.5" y1="22" x2="815.5" y2="28" stroke="#333333" stroke-width="1"/>
<line x1="826.5" y1="22" x2="826.5" y2="25" stroke="#333333" stroke-width="1"/>
<line x1="836.5" y1="22" x2="836.5" y2="28" stroke="#333333" stroke-width="1"/>
<line x1="846.5" y1="22" x2="846.5" y2="25" stroke="#333333" stroke-width="1"/>
<line x1="867.5" y1="22" x2="867.5" y2="25" stroke="#333333" stroke-width="1"/>
<line x1="878.5" y1="22" x2="878.5" y2="28" stroke="#333333" stroke-width="1"/>
<line x1="888.5" y1="22" x2="888.5" y2="25" stroke="#333333" stroke-width="1"/>
<line x1="899.5" y1="22" x2="899.5" y2="28" stroke="#333333" stroke-width="1"/>
<line x1="909.5" y1="22" x2="909.5" y2="25" stroke="#333333" stroke-width="1"/>
<line x1="920.5" y1="22" x2="920.5" y2="28" stroke="#333333" stroke-width="1"/>
<line x1="930.5" y1="22" x2="930.5" y2="25" stroke="#333333" stroke-width="1"/>
<line x1="952.5" y1="22" x2="952.5" y2="25" stroke="#333333" stroke-width="1"/>
<line x1="962.5" y1="22" x2="962.5" y2="28" stroke="#333333" stroke-width="1"/>
<line x1="973.5" y1="22" x2="973.5" y2="25" stroke="#333333" stroke-width="1"/>
<line x1="983.5" y1="22" x2="983.5" y2="28" stroke="#333333" stroke-width="1"/>
<line x1="994.5" y1="22" x2="994.5" y2="25" stroke="#333333" stroke-width="1"/>
<line x1="1004.5" y1="22" x2="1004.5" y2="28" stroke="#333333" stroke-width="1"/>
<line x1="1015.5" y1="22" x2="1015.5" y2="25" stroke="#333333" stroke-width="1"/>
<line x1="1034.5" y1="22" x2="1034.5" y2="25" stroke="#333333" stroke-width="1"/>
<line x1="1043.5" y1="22" x2="1043.5" y2="28" stroke="#333333" stroke-width="1"/>
<line x1="1051.5" y1="22" x2="1051.5" y2="25" stroke="#333333" stroke-width="1"/>
<line x1="1060.5" y1="22" x2="1060.5" y2="28" stroke="#333333" stroke-width="1"/>
<line x1="1069.5" y1="22" x2="1069.5" y2="25" stroke="#333333" stroke-width="1"/>
<line x1="1078.5" y1="22" x2="1078.5" y2="28" stroke="#333333" stroke-width="1"/>
<line x1="1086.5" y1="22" x2="1086.5" y2="25" stroke="#333333" stroke-width="1"/>
<line x1="1102.5" y1="22" x2="1102.5" y2="28" stroke="#333333" stroke-width="1"/>
<line x1="1109.5" y1="22" x2="1109.5" y2="28" stroke="#333333" stroke-width="1"/>
<line x1="1116.5" y1="22" x2="1116.5" y2="28" stroke="#333333" stroke-width="1"/>
<line x1="1134.5" y1="22" x2="1134.5" y2="25" stroke="#333333" stroke-width="1"/>
<line x1="1144.5" y1="22" x2="1144.5" y2="28" stroke="#333333" stroke-width="1"/>
<line x1="1155.5" y1="22" x2="1155.5" y2="25" stroke="#333333" stroke-width="1"/>
<line x1="1165.5" y1="22" x2="1165.5" y2="28" stroke="#333333" stroke-width="1"/>
<line x1="1176.5" y1="22" x2="1176.5" y2="25" stroke="#333333" stroke-width="1"/>
<line x1="1186.5" y1="22" x2="1186.5" y2="28" stroke="#333333" stroke-width="1"/>
<line x1="1197.5" y1="22" x2="1197.5" y2="25" stroke="#333333" stroke-width="1"/>
<line x1="1218.5" y1="22" x2="1218.5" y2="25" stroke="#333333" stroke-width="1"/>
<line x1="1228.5" y1="22" x2="1228.5" y2="28" stroke="#333333" stroke-width="1"/>
<line x1="1239.5" y1="22" x2="1239.5" y2="25" stroke="#333333" stroke-width="1"/>
<line x1="1249.5" y1="22" x2="1249.5" y2="28" stroke="#333333" stroke-width="1"/>
<line x1="1260.5" y1="22" x2="1260.5" y2="25" stroke="#333333" stroke-width="1"/>
<line x1="1270.5" y1="22" x2="1270.5" y2="28" stroke="#333333" stroke-width="1"/>
<line x1="1280.5" y1="22" x2="1280.5" y2="25" stroke="#333333" stroke-width="1"/>
<line x1="1301.5" y1="22" x2="1301.5" y2="25" stroke="#333333" stroke-width="1"/>
<line x1="1312.5" y1="22" x2="1312.5" y2="28" stroke="#333333" stroke-width="1"/>
<line x1="1322.5" y1="22" x2="1322.5" y2="25" stroke="#333333" stroke-width="1"/>
<line x1="1333.5" y1="22" x2="1333.5" y2="28" stroke="#333333" stroke-width="1"/>
<line x1="1343.5" y1="22" x2="1343.5" y2="25" stroke="#333333" stroke-width="1"/>
<line x1="1354.5" y1="22" x2="1354.5" y2="28" stroke="#333333" stroke-width="1"/>
<line x1="1364.5" y1="22" x2="1364.5" y2="25" stroke="#333333" stroke-width="1"/>
<line x1="1386.5" y1="22" x2="1386.5" y2="25" stroke="#333333" stroke-width="1"/>
<line x1="1396.5" y1="22" x2="1396.5" y2="28" stroke="#333333" stroke-width="1"/>
<line x1="1407.5" y1="22" x2="1407.5" y2="25" stroke="#333333" stroke-width="1"/>
<line x1="1417.5" y1="22" x2="1417.5" y2="28" stroke="#333333" stroke-width="1"/>
<line x1="1428.5" y1="22" x2="1428.5" y2="25" stroke="#333333" stroke-width="1"/>
<line x1="1438.5" y1="22" x2="1438.5" y2="28" stroke="#333333" stroke-width="1"/>
<line x1="1449.5" y1="22" x2="1449.5" y2="25" stroke="#333333" stroke-width="1"/>
<line x1="1470.5" y1="22" x2="1470.5" y2="25" stroke="#333333" stroke-width="1"/>
<line x1="1480.5" y1="22" x2="1480.5" y2="28" stroke="#333333" stroke-width="1"/>
<line x1="1491.5" y1="22" x2="1491.5" y2="25" stroke="#333333" stroke-width="1"/>
<line x1="1501.5" y1="22" x2="1501.5" y2="28" stroke="#333333" stroke-width="1"/>
<line x1="1512.5" y1="22" x2="1512.5" y2="25" stroke="#333333" stroke-width="1"/>
<line x1="1522.5" y1="22" x2="1522.5" y2="28" stroke="#333333" stroke-width="1"/>
<line x1="1533.5" y1="22" x2="1533.5" y2="25" stroke="#333333" stroke-width="1"/>
<line x1="1554.5" y1="22" x2="1554.5" y2="25" stroke="#333333" stroke-width="1"/>
<line x1="1564.5" y1="22" x2="1564.5" y2="28" stroke="#333333" stroke-width="1"/>
<line x1="1575.5" y1="22" x2="1575.5" y2="25" stroke="#333333" stroke-width="1"/>
<line x1="1585.5" y1="22" x2="1585.5" y2="28" stroke="#333333" stroke-width="1"/>
<line x1="1595.5" y1="22" x2="1595.5" y2="25" stroke="#333333" stroke-width="1"/>
<line x1="1606.5" y1="22" x2="1606.5" y2="28" stroke="#333333" stroke-width="1"/>
<line x1="1616.5" y1="22" x2="1616.5" y2="25" stroke="#333333" stroke-width="1"/>
<line x1="1637.5" y1="22" x2="1637.5" y2="25" stroke="#333333" stroke-width="1"/>
<line x1="1648.5" y1="22" x2="1648.5" y2="28" stroke="#333333" stroke-width="1"/>
<line x1="1658.5" y1="22" x2="1658.5" y2="25" stroke="#333333" stroke-width="1"/>
<line x1="1669.5" y1="22" x2="1669.5" y2="28" stroke="#333333" stroke-width="1"/>
<line x1="1679.5" y1="22" x2="1679.5" y2="25" stroke="#333333" stroke-width="1"/>
<line x1="1690.5" y1="22" x2="1690.5" y2="28" stroke="#333333" stroke-width="1"/>
<line x1="1701.5" y1="22" x2="1701.5" y2="25" stroke="#333333" stroke-width="1"/>
<line x1="1722.5" y1="22" x2="1722.5" y2="25" stroke="#333333" stroke-width="1"/>
<line x1="1732.5" y1="22" x2="1732.5" y2="28" stroke="#333333" stroke-width="1"/>
<line x1="1743.5" y1="22" x2="1743.5" y2="25" stroke="#333333" stroke-width="1"/>
<line x1="1753.5" y1="22" x2="1753.5" y2="28" stroke="#333333" stroke-width="1"/>
<line x1="1764.5" y1="22" x2="1764.5" y2="25" stroke="#333333" stroke-width="1"/>
<line x1="1774.5" y1="22" x2="1774.5" y2="28" stroke="#333333" stroke-width="1"/>
<line x1="1785.5" y1="22" x2="1785.5" y2="25" stroke="#333333" stroke-width="1"/>
<line x1="63.5" y1="22" x2="63.5" y2="25" stroke="#333333" stroke-width="1"/>
<line x1="52.5" y1="22" x2="52.5" y2="28" stroke="#333333" stroke-width="1"/>
<line x1="42.5" y1="22" x2="42.5" y2="25" stroke="#333333" stroke-width="1"/>
<line x1="31.5" y1="22" x2="31.5" y2="28" stroke="#333333" stroke-width="1"/>
<line x1="21.5" y1="22" x2="21.5" y2="25" stroke="#333333" stroke-width="1"/>
<line x1="10.5" y1="22" x2="10.5" y2="28" stroke="#333333" stroke-width="1"/>
<line x1="1806.5" y1="22" x2="1806.5" y2="25" stroke="#333333" stroke-width="1"/>
<line x1="1816.5" y1="22" x2="1816.5" y2="28" stroke="#333333" stroke-width="1"/>
<line x1="1827.5" y1="22" x2="1827.5" y2="25" stroke="#333333" stroke-width="1"/>
<line x1="1837.5" y1="22" x2="1837.5" y2="28" stroke="#333333" stroke-width="1"/>
<line x1="1845.5" y1="21" x2="1845.5" y2="614" stroke="#333333" stroke-width="1.2"/>
<line x1="1830" y1="42.5" x2="1846" y2="42.5" stroke="#333333" stroke-width="1"/>
<line x1="1841" y1="56.5" x2="1846" y2="56.5" stroke="#333333" stroke-width="1"/>
<line x1="1841" y1="70.5" x2="1846" y2="70.5" stroke="#333333" stroke-width="1"/>
<line x1="1841" y1="84.5" x2="1846" y2="84.5" stroke="#333333" stroke-width="1"/>
<line x1="1841" y1="98.5" x2="1846" y2="98.5" stroke="#333333" stroke-width="1"/>
<line x1="1838" y1="112.5" x2="1846" y2="112.5" stroke="#333333" stroke-width="1"/>
<line x1="1841" y1="126.5" x2="1846" y2="126.5" stroke="#333333" stroke-width="1"/>
<line x1="1841" y1="140.5" x2="1846" y2="140.5" stroke="#333333" stroke-width="1"/>
<line x1="1841" y1="154.5" x2="1846" y2="154.5" stroke="#333333" stroke-width="1"/>
<line x1="1841" y1="168.5" x2="1846" y2="168.5" stroke="#333333" stroke-width="1"/>
<line x1="1830" y1="182.5" x2="1846" y2="182.5" stroke="#333333" stroke-width="1"/>
<line x1="1841" y1="196.5" x2="1846" y2="196.5" stroke="#333333" stroke-width="1"/>
<line x1="1841" y1="210.5" x2="1846" y2="210.5" stroke="#333333" stroke-width="1"/>
<line x1="1841" y1="224.5" x2="1846" y2="224.5" stroke="#333333" stroke-width="1"/>
<line x1="1841" y1="238.5" x2="1846" y2="238.5" stroke="#333333" stroke-width="1"/>
<line x1="1838" y1="252.5" x2="1846" y2="252.5" stroke="#333333" stroke-width="1"/>
<line x1="1841" y1="266.5" x2="1846" y2="266.5" stroke="#333333" stroke-width="1"/>
<line x1="1841" y1="280.5" x2="1846" y2="280.5" stroke="#333333" stroke-width="1"/>
<line x1="1841" y1="294.5" x2="1846" y2="294.5" stroke="#333333" stroke-width="1"/>
<line x1="1841" y1="308.5" x2="1846" y2="308.5" stroke="#333333" stroke-width="1"/>
<line x1="1830" y1="322.5" x2="1846" y2="322.5" stroke="#333333" stroke-width="1"/>
<line x1="1841" y1="336.5" x2="1846" y2="336.5" stroke="#333333" stroke-width="1"/>
<line x1="1841" y1="350.5" x2="1846" y2="350.5" stroke="#333333" stroke-width="1"/>
<line x1="1841" y1="364.5" x2="1846" y2="364.5" stroke="#333333" stroke-width="1"/>
<line x1="1841" y1="378.5" x2="1846" y2="378.5" stroke="#333333" stroke-width="1"/>
<line x1="1838" y1="392.5" x2="1846" y2="392.5" stroke="#333333" stroke-width="1"/>
<line x1="1841" y1="406.5" x2="1846" y2="406.5" stroke="#333333" stroke-width="1"/>
<line x1="1841" y1="420.5" x2="1846" y2="420.5" stroke="#333333" stroke-width="1"/>
<line x1="1841" y1="434.5" x2="1846" y2="434.5" stroke="#333333" stroke-width="1"/>
<line x1="1841" y1="448.5" x2="1846" y2="448.5" stroke="#333333" stroke-width="1"/>
<line x1="1830" y1="462.5" x2="1846" y2="462.5" stroke="#333333" stroke-width="1"/>
<line x1="1841" y1="476.5" x2="1846" y2="476.5" stroke="#333333" stroke-width="1"/>
<line x1="1841" y1="490.5" x2="1846" y2="490.5" stroke="#333333" stroke-width="1"/>
<line x1="1841" y1="504.5" x2="1846" y2="504.5" stroke="#333333" stroke-width="1"/>
<line x1="1841" y1="518.5" x2="1846" y2="518.5" stroke="#333333" stroke-width="1"/>
<line x1="1838" y1="532.5" x2="1846" y2="532.5" stroke="#333333" stroke-width="1"/>
<line x1="1841" y1="546.5" x2="1846" y2="546.5" stroke="#333333" stroke-width="1"/>
<line x1="1841" y1="560.5" x2="1846" y2="560.5" stroke="#333333" stroke-width="1"/>
<line x1="1841" y1="574.5" x2="1846" y2="574.5" stroke="#333333" stroke-width="1"/>
<line x1="1841" y1="588.5" x2="1846" y2="588.5" stroke="#333333" stroke-width="1"/>
<line x1="1830" y1="602.5" x2="1846" y2="602.5" stroke="#333333" stroke-width="1"/>
<text x="1849" y="47.0" font-size="12" fill="#000" stroke="#000" stroke-width="0.3">1,3000</text>
<text x="1849" y="187.0" font-size="12" fill="#000" stroke="#000" stroke-width="0.3">1,2750</text>
<text x="1849" y="467.0" font-size="12" fill="#000" stroke="#000" stroke-width="0.3">1,2250</text>
<text x="1849" y="607.0" font-size="12" fill="#000" stroke="#000" stroke-width="0.3">1,2000</text>
<rect x="1846" y="313" width="48" height="20" fill="#66ccff"/>
<text x="1848" y="327.5" font-size="12" fill="#000" stroke="#000" stroke-width="0.3">1,24974</text>
<line x1="0" y1="613.5" x2="1846" y2="613.5" stroke="#333333" stroke-width="1.2"/>
<line x1="0.5" y1="600" x2="0.5" y2="614" stroke="#333333" stroke-width="1.2"/>
<line x1="3.5" y1="607" x2="3.5" y2="614" stroke="#333333" stroke-width="1"/>
<line x1="17.5" y1="610" x2="17.5" y2="614" stroke="#333333" stroke-width="1"/>
<line x1="31.5" y1="601" x2="31.5" y2="614" stroke="#333333" stroke-width="1"/>
<line x1="45.5" y1="610" x2="45.5" y2="614" stroke="#333333" stroke-width="1"/>
<line x1="59.5" y1="607" x2="59.5" y2="614" stroke="#333333" stroke-width="1"/>
<line x1="73.5" y1="610" x2="73.5" y2="614" stroke="#333333" stroke-width="1"/>
<line x1="87.5" y1="607" x2="87.5" y2="614" stroke="#333333" stroke-width="1"/>
<line x1="101.5" y1="610" x2="101.5" y2="614" stroke="#333333" stroke-width="1"/>
<line x1="115.5" y1="607" x2="115.5" y2="614" stroke="#333333" stroke-width="1"/>
<line x1="129.5" y1="610" x2="129.5" y2="614" stroke="#333333" stroke-width="1"/>
<line x1="143.5" y1="601" x2="143.5" y2="614" stroke="#333333" stroke-width="1"/>
<line x1="157.5" y1="610" x2="157.5" y2="614" stroke="#333333" stroke-width="1"/>
<line x1="171.5" y1="607" x2="171.5" y2="614" stroke="#333333" stroke-width="1"/>
<line x1="185.5" y1="610" x2="185.5" y2="614" stroke="#333333" stroke-width="1"/>
<line x1="199.5" y1="607" x2="199.5" y2="614" stroke="#333333" stroke-width="1"/>
<line x1="213.5" y1="610" x2="213.5" y2="614" stroke="#333333" stroke-width="1"/>
<line x1="227.5" y1="607" x2="227.5" y2="614" stroke="#333333" stroke-width="1"/>
<line x1="241.5" y1="610" x2="241.5" y2="614" stroke="#333333" stroke-width="1"/>
<line x1="255.5" y1="601" x2="255.5" y2="614" stroke="#333333" stroke-width="1"/>
<line x1="269.5" y1="610" x2="269.5" y2="614" stroke="#333333" stroke-width="1"/>
<line x1="283.5" y1="607" x2="283.5" y2="614" stroke="#333333" stroke-width="1"/>
<line x1="297.5" y1="610" x2="297.5" y2="614" stroke="#333333" stroke-width="1"/>
<line x1="311.5" y1="607" x2="311.5" y2="614" stroke="#333333" stroke-width="1"/>
<line x1="325.5" y1="610" x2="325.5" y2="614" stroke="#333333" stroke-width="1"/>
<line x1="339.5" y1="607" x2="339.5" y2="614" stroke="#333333" stroke-width="1"/>
<line x1="353.5" y1="610" x2="353.5" y2="614" stroke="#333333" stroke-width="1"/>
<line x1="367.5" y1="601" x2="367.5" y2="614" stroke="#333333" stroke-width="1"/>
<line x1="381.5" y1="610" x2="381.5" y2="614" stroke="#333333" stroke-width="1"/>
<line x1="395.5" y1="607" x2="395.5" y2="614" stroke="#333333" stroke-width="1"/>
<line x1="409.5" y1="610" x2="409.5" y2="614" stroke="#333333" stroke-width="1"/>
<line x1="423.5" y1="607" x2="423.5" y2="614" stroke="#333333" stroke-width="1"/>
<line x1="437.5" y1="610" x2="437.5" y2="614" stroke="#333333" stroke-width="1"/>
<line x1="451.5" y1="607" x2="451.5" y2="614" stroke="#333333" stroke-width="1"/>
<line x1="465.5" y1="610" x2="465.5" y2="614" stroke="#333333" stroke-width="1"/>
<line x1="479.5" y1="601" x2="479.5" y2="614" stroke="#333333" stroke-width="1"/>
<line x1="493.5" y1="610" x2="493.5" y2="614" stroke="#333333" stroke-width="1"/>
<line x1="507.5" y1="607" x2="507.5" y2="614" stroke="#333333" stroke-width="1"/>
<line x1="521.5" y1="610" x2="521.5" y2="614" stroke="#333333" stroke-width="1"/>
<line x1="535.5" y1="607" x2="535.5" y2="614" stroke="#333333" stroke-width="1"/>
<line x1="549.5" y1="610" x2="549.5" y2="614" stroke="#333333" stroke-width="1"/>
<line x1="563.5" y1="607" x2="563.5" y2="614" stroke="#333333" stroke-width="1"/>
<line x1="577.5" y1="610" x2="577.5" y2="614" stroke="#333333" stroke-width="1"/>
<line x1="591.5" y1="601" x2="591.5" y2="614" stroke="#333333" stroke-width="1"/>
<line x1="605.5" y1="610" x2="605.5" y2="614" stroke="#333333" stroke-width="1"/>
<line x1="619.5" y1="607" x2="619.5" y2="614" stroke="#333333" stroke-width="1"/>
<line x1="633.5" y1="610" x2="633.5" y2="614" stroke="#333333" stroke-width="1"/>
<line x1="647.5" y1="607" x2="647.5" y2="614" stroke="#333333" stroke-width="1"/>
<line x1="661.5" y1="610" x2="661.5" y2="614" stroke="#333333" stroke-width="1"/>
<line x1="675.5" y1="607" x2="675.5" y2="614" stroke="#333333" stroke-width="1"/>
<line x1="689.5" y1="610" x2="689.5" y2="614" stroke="#333333" stroke-width="1"/>
<line x1="703.5" y1="601" x2="703.5" y2="614" stroke="#333333" stroke-width="1"/>
<line x1="717.5" y1="610" x2="717.5" y2="614" stroke="#333333" stroke-width="1"/>
<line x1="731.5" y1="607" x2="731.5" y2="614" stroke="#333333" stroke-width="1"/>
<line x1="745.5" y1="610" x2="745.5" y2="614" stroke="#333333" stroke-width="1"/>
<line x1="759.5" y1="607" x2="759.5" y2="614" stroke="#333333" stroke-width="1"/>
<line x1="773.5" y1="610" x2="773.5" y2="614" stroke="#333333" stroke-width="1"/>
<line x1="787.5" y1="607" x2="787.5" y2="614" stroke="#333333" stroke-width="1"/>
<line x1="801.5" y1="610" x2="801.5" y2="614" stroke="#333333" stroke-width="1"/>
<line x1="815.5" y1="601" x2="815.5" y2="614" stroke="#333333" stroke-width="1"/>
<line x1="829.5" y1="610" x2="829.5" y2="614" stroke="#333333" stroke-width="1"/>
<line x1="843.5" y1="607" x2="843.5" y2="614" stroke="#333333" stroke-width="1"/>
<line x1="857.5" y1="610" x2="857.5" y2="614" stroke="#333333" stroke-width="1"/>
<line x1="871.5" y1="607" x2="871.5" y2="614" stroke="#333333" stroke-width="1"/>
<line x1="885.5" y1="610" x2="885.5" y2="614" stroke="#333333" stroke-width="1"/>
<line x1="899.5" y1="607" x2="899.5" y2="614" stroke="#333333" stroke-width="1"/>
<line x1="913.5" y1="610" x2="913.5" y2="614" stroke="#333333" stroke-width="1"/>
<line x1="927.5" y1="601" x2="927.5" y2="614" stroke="#333333" stroke-width="1"/>
<line x1="941.5" y1="610" x2="941.5" y2="614" stroke="#333333" stroke-width="1"/>
<line x1="955.5" y1="607" x2="955.5" y2="614" stroke="#333333" stroke-width="1"/>
<line x1="969.5" y1="610" x2="969.5" y2="614" stroke="#333333" stroke-width="1"/>
<line x1="983.5" y1="607" x2="983.5" y2="614" stroke="#333333" stroke-width="1"/>
<line x1="997.5" y1="610" x2="997.5" y2="614" stroke="#333333" stroke-width="1"/>
<line x1="1011.5" y1="607" x2="1011.5" y2="614" stroke="#333333" stroke-width="1"/>
<line x1="1025.5" y1="610" x2="1025.5" y2="614" stroke="#333333" stroke-width="1"/>
<line x1="1039.5" y1="601" x2="1039.5" y2="614" stroke="#333333" stroke-width="1"/>
<line x1="1053.5" y1="610" x2="1053.5" y2="614" stroke="#333333" stroke-width="1"/>
<line x1="1067.5" y1="607" x2="1067.5" y2="614" stroke="#333333" stroke-width="1"/>
<line x1="1081.5" y1="610" x2="1081.5" y2="614" stroke="#333333" stroke-width="1"/>
<line x1="1095.5" y1="607" x2="1095.5" y2="614" stroke="#333333" stroke-width="1"/>
<line x1="1109.5" y1="610" x2="1109.5" y2="614" stroke="#333333" stroke-width="1"/>
<line x1="1123.5" y1="607" x2="1123.5" y2="614" stroke="#333333" stroke-width="1"/>
<line x1="1137.5" y1="610" x2="1137.5" y2="614" stroke="#333333" stroke-width="1"/>
<line x1="1151.5" y1="601" x2="1151.5" y2="614" stroke="#333333" stroke-width="1"/>
<line x1="1165.5" y1="610" x2="1165.5" y2="614" stroke="#333333" stroke-width="1"/>
<line x1="1179.5" y1="607" x2="1179.5" y2="614" stroke="#333333" stroke-width="1"/>
<line x1="1193.5" y1="610" x2="1193.5" y2="614" stroke="#333333" stroke-width="1"/>
<line x1="1207.5" y1="607" x2="1207.5" y2="614" stroke="#333333" stroke-width="1"/>
<line x1="1221.5" y1="610" x2="1221.5" y2="614" stroke="#333333" stroke-width="1"/>
<line x1="1235.5" y1="607" x2="1235.5" y2="614" stroke="#333333" stroke-width="1"/>
<line x1="1249.5" y1="610" x2="1249.5" y2="614" stroke="#333333" stroke-width="1"/>
<line x1="1263.5" y1="601" x2="1263.5" y2="614" stroke="#333333" stroke-width="1"/>
<line x1="1277.5" y1="610" x2="1277.5" y2="614" stroke="#333333" stroke-width="1"/>
<line x1="1291.5" y1="607" x2="1291.5" y2="614" stroke="#333333" stroke-width="1"/>
<line x1="1305.5" y1="610" x2="1305.5" y2="614" stroke="#333333" stroke-width="1"/>
<line x1="1319.5" y1="607" x2="1319.5" y2="614" stroke="#333333" stroke-width="1"/>
<line x1="1333.5" y1="610" x2="1333.5" y2="614" stroke="#333333" stroke-width="1"/>
<line x1="1347.5" y1="607" x2="1347.5" y2="614" stroke="#333333" stroke-width="1"/>
<line x1="1361.5" y1="610" x2="1361.5" y2="614" stroke="#333333" stroke-width="1"/>
<line x1="1375.5" y1="601" x2="1375.5" y2="614" stroke="#333333" stroke-width="1"/>
<line x1="1389.5" y1="610" x2="1389.5" y2="614" stroke="#333333" stroke-width="1"/>
<line x1="1403.5" y1="607" x2="1403.5" y2="614" stroke="#333333" stroke-width="1"/>
<line x1="1417.5" y1="610" x2="1417.5" y2="614" stroke="#333333" stroke-width="1"/>
<line x1="1431.5" y1="607" x2="1431.5" y2="614" stroke="#333333" stroke-width="1"/>
<line x1="1445.5" y1="610" x2="1445.5" y2="614" stroke="#333333" stroke-width="1"/>
<line x1="1459.5" y1="607" x2="1459.5" y2="614" stroke="#333333" stroke-width="1"/>
<line x1="1473.5" y1="610" x2="1473.5" y2="614" stroke="#333333" stroke-width="1"/>
<line x1="1487.5" y1="601" x2="1487.5" y2="614" stroke="#333333" stroke-width="1"/>
<line x1="1501.5" y1="610" x2="1501.5" y2="614" stroke="#333333" stroke-width="1"/>
<line x1="1515.5" y1="607" x2="1515.5" y2="614" stroke="#333333" stroke-width="1"/>
<line x1="1529.5" y1="610" x2="1529.5" y2="614" stroke="#333333" stroke-width="1"/>
<line x1="1543.5" y1="607" x2="1543.5" y2="614" stroke="#333333" stroke-width="1"/>
<line x1="1557.5" y1="610" x2="1557.5" y2="614" stroke="#333333" stroke-width="1"/>
<line x1="1571.5" y1="607" x2="1571.5" y2="614" stroke="#333333" stroke-width="1"/>
<line x1="1585.5" y1="610" x2="1585.5" y2="614" stroke="#333333" stroke-width="1"/>
<line x1="1599.5" y1="601" x2="1599.5" y2="614" stroke="#333333" stroke-width="1"/>
<line x1="1613.5" y1="610" x2="1613.5" y2="614" stroke="#333333" stroke-width="1"/>
<line x1="1627.5" y1="607" x2="1627.5" y2="614" stroke="#333333" stroke-width="1"/>
<line x1="1641.5" y1="610" x2="1641.5" y2="614" stroke="#333333" stroke-width="1"/>
<line x1="1655.5" y1="607" x2="1655.5" y2="614" stroke="#333333" stroke-width="1"/>
<line x1="1669.5" y1="610" x2="1669.5" y2="614" stroke="#333333" stroke-width="1"/>
<line x1="1683.5" y1="607" x2="1683.5" y2="614" stroke="#333333" stroke-width="1"/>
<line x1="1697.5" y1="610" x2="1697.5" y2="614" stroke="#333333" stroke-width="1"/>
<line x1="1711.5" y1="601" x2="1711.5" y2="614" stroke="#333333" stroke-width="1"/>
<line x1="1725.5" y1="610" x2="1725.5" y2="614" stroke="#333333" stroke-width="1"/>
<line x1="1739.5" y1="607" x2="1739.5" y2="614" stroke="#333333" stroke-width="1"/>
<line x1="1753.5" y1="610" x2="1753.5" y2="614" stroke="#333333" stroke-width="1"/>
<line x1="1767.5" y1="607" x2="1767.5" y2="614" stroke="#333333" stroke-width="1"/>
<line x1="1781.5" y1="610" x2="1781.5" y2="614" stroke="#333333" stroke-width="1"/>
<line x1="1795.5" y1="607" x2="1795.5" y2="614" stroke="#333333" stroke-width="1"/>
<line x1="1809.5" y1="610" x2="1809.5" y2="614" stroke="#333333" stroke-width="1"/>
<line x1="1823.5" y1="601" x2="1823.5" y2="614" stroke="#333333" stroke-width="1"/>
<line x1="1837.5" y1="610" x2="1837.5" y2="614" stroke="#333333" stroke-width="1"/>
<text x="1" y="634.5" font-size="12.7" text-anchor="start" fill="#000" stroke="#000" stroke-width="0.3">15/10/2014 01:00</text>
<text x="255.5" y="634.5" font-size="12.7" text-anchor="middle" fill="#000" stroke="#000" stroke-width="0.3">19/10 21:00</text>
<text x="367.5" y="634.5" font-size="12.7" text-anchor="middle" fill="#000" stroke="#000" stroke-width="0.3">21/10 05:00</text>
<text x="479.5" y="634.5" font-size="12.7" text-anchor="middle" fill="#000" stroke="#000" stroke-width="0.3">22/10 13:00</text>
<text x="591.5" y="634.5" font-size="12.7" text-anchor="middle" fill="#000" stroke="#000" stroke-width="0.3">23/10 21:00</text>
<text x="703.5" y="634.5" font-size="12.7" text-anchor="middle" fill="#000" stroke="#000" stroke-width="0.3">27/10 01:00</text>
<text x="815.5" y="634.5" font-size="12.7" text-anchor="middle" fill="#000" stroke="#000" stroke-width="0.3">28/10 09:00</text>
<text x="927.5" y="634.5" font-size="12.7" text-anchor="middle" fill="#000" stroke="#000" stroke-width="0.3">29/10 17:00</text>
<text x="1039.5" y="634.5" font-size="12.7" text-anchor="middle" fill="#000" stroke="#000" stroke-width="0.3">31/10 01:00</text>
<text x="1151.5" y="634.5" font-size="12.7" text-anchor="middle" fill="#000" stroke="#000" stroke-width="0.3">03/11 05:00</text>
<text x="1263.5" y="634.5" font-size="12.7" text-anchor="middle" fill="#000" stroke="#000" stroke-width="0.3">04/11 13:00</text>
<text x="1375.5" y="634.5" font-size="12.7" text-anchor="middle" fill="#000" stroke="#000" stroke-width="0.3">05/11 21:00</text>
<text x="1487.5" y="634.5" font-size="12.7" text-anchor="middle" fill="#000" stroke="#000" stroke-width="0.3">07/11 05:00</text>
<text x="1599.5" y="634.5" font-size="12.7" text-anchor="middle" fill="#000" stroke="#000" stroke-width="0.3">08/11 13:00</text>
<text x="1711.5" y="634.5" font-size="12.7" text-anchor="middle" fill="#000" stroke="#000" stroke-width="0.3">09/11 21:00</text>
<text x="1821" y="634.5" font-size="12.7" text-anchor="middle" fill="#000" stroke="#000" stroke-width="0.3">11/11 05:00</text>
<text x="8" y="660" font-size="12.8" fill="#ff0000" stroke="#ff0000" stroke-width="0.3">RSI(EUR/USD.Cloture, 21): 39,10</text>
<line x1="1" y1="651.5" x2="1830" y2="651.5" stroke="#000" stroke-width="1.2"/>
<line x1="1" y1="679.5" x2="1830" y2="679.5" stroke="#ff5a5a" stroke-width="1"/>
<line x1="1" y1="698.5" x2="1830" y2="698.5" stroke="#000" stroke-width="1.2"/>
<line x1="1" y1="717.5" x2="1830" y2="717.5" stroke="#ff5a5a" stroke-width="1"/>
<line x1="1" y1="745.5" x2="1846" y2="745.5" stroke="#000" stroke-width="1.2"/>
<polyline points="0.0,700.9 3.4,700.3 17.4,689.6 31.2,686.8 45.0,683.5 59.0,683.5 64.0,684.0 73.0,686.1 87.0,690.0 100.6,693.8 114.4,688.7 121.4,689.0 128.0,690.0 144.0,690.8 162.0,690.8 171.7,688.6 177.0,689.0 190.7,692.5 201.0,696.0 215.0,696.9 241.0,696.9 242.8,696.0 282.6,696.0 298.0,692.0 312.0,692.5 329.5,692.5 335.6,690.8 353.0,690.8 367.7,698.6 375.5,699.5 389.4,701.6 427.5,701.6 446.6,706.4 465.7,707.3 479.5,708.5 512.5,708.5 523.0,705.9 535.0,705.9 543.7,707.3 562.8,707.3 571.4,705.9 604.4,705.9 614.8,702.4 626.0,702.4 628.6,703.8 647.0,703.0 662.5,701.2 674.7,700.9 685.0,697.7 695.5,697.7 704.0,699.1 719.8,699.5 728.4,696.9 738.0,697.0 761.4,697.4 789.0,697.4 799.5,692.0 815.0,692.0 817.0,692.5 856.8,692.5 865.4,694.6 877.6,694.4 896.6,690.8 900.0,690.8 912.2,707.3 927.0,707.8 934.8,709.5 952.0,712.5 959.0,712.0 969.5,709.2 979.0,706.9 996.9,706.9 997.8,707.8 1011.0,707.8 1012.0,708.8 1025.0,708.8 1026.0,709.7 1039.5,710.7 1050.0,714.8 1060.0,713.9 1081.0,713.9 1083.0,714.8 1095.0,715.0 1104.7,717.9 1114.0,717.9 1124.6,715.0 1137.8,713.1 1158.6,713.9 1183.0,713.9 1189.0,711.6 1204.0,707.8 1234.3,707.8 1249.4,703.7 1291.0,703.1 1305.2,707.8" fill="none" stroke="#ee0000" stroke-width="2" stroke-linejoin="round" shape-rendering="crispEdges"/>
<line x1="1845.5" y1="646" x2="1845.5" y2="746" stroke="#333333" stroke-width="1.2"/>
<line x1="1831" y1="651.5" x2="1846" y2="651.5" stroke="#333333" stroke-width="1"/>
<line x1="1841" y1="660.5" x2="1846" y2="660.5" stroke="#333333" stroke-width="1"/>
<line x1="1841" y1="670.5" x2="1846" y2="670.5" stroke="#333333" stroke-width="1"/>
<line x1="1841" y1="679.5" x2="1846" y2="679.5" stroke="#333333" stroke-width="1"/>
<line x1="1841" y1="689.5" x2="1846" y2="689.5" stroke="#333333" stroke-width="1"/>
<line x1="1838" y1="698.5" x2="1846" y2="698.5" stroke="#333333" stroke-width="1"/>
<line x1="1841" y1="707.5" x2="1846" y2="707.5" stroke="#333333" stroke-width="1"/>
<line x1="1841" y1="717.5" x2="1846" y2="717.5" stroke="#333333" stroke-width="1"/>
<line x1="1841" y1="726.5" x2="1846" y2="726.5" stroke="#333333" stroke-width="1"/>
<line x1="1841" y1="736.5" x2="1846" y2="736.5" stroke="#333333" stroke-width="1"/>
<line x1="1831" y1="745.5" x2="1846" y2="745.5" stroke="#333333" stroke-width="1"/>
<rect x="1848" y="644" width="21" height="16" fill="#a0a0a0"/><text x="1849" y="657" font-size="12" fill="#000" stroke="#000" stroke-width="0.3">100</text>
<rect x="1848" y="672" width="14" height="16" fill="#ff5555"/><text x="1849" y="685" font-size="12" fill="#000" stroke="#000" stroke-width="0.3">70</text>
<rect x="1848" y="691" width="14" height="16" fill="#a0a0a0"/><text x="1849" y="704" font-size="12" fill="#000" stroke="#000" stroke-width="0.3">50</text>
<rect x="1848" y="710" width="14" height="16" fill="#ff5555"/><text x="1849" y="723" font-size="12" fill="#000" stroke="#000" stroke-width="0.3">30</text>
<rect x="1848" y="738" width="7" height="14" fill="#a0a0a0"/><text x="1848.5" y="750" font-size="12" fill="#000" stroke="#000" stroke-width="0.3">0</text>
<text x="8" y="767.5" font-size="13" fill="#0080ff" stroke="#0080ff" stroke-width="0.3">EUR/USD - Volume: 36 530</text>
<line x1="1" y1="892.5" x2="1846" y2="892.5" stroke="#dcdcdc" stroke-width="1"/>
<rect x="-1" y="858.9" width="9" height="33.10000000000002" fill="#0080ff"/>
<rect x="13" y="837.0" width="9" height="55.0" fill="#0080ff"/>
<rect x="27" y="761.3" width="9" height="130.70000000000005" fill="#0080ff"/>
<rect x="41" y="839.0" width="9" height="53.0" fill="#0080ff"/>
<rect x="55" y="873.1" width="9" height="18.899999999999977" fill="#0080ff"/>
<rect x="69" y="874.0" width="9" height="18.0" fill="#0080ff"/>
<rect x="83" y="838.1" width="9" height="53.89999999999998" fill="#0080ff"/>
<rect x="97" y="796.0" width="9" height="96.0" fill="#0080ff"/>
<rect x="111" y="814.2" width="9" height="77.79999999999995" fill="#0080ff"/>
<rect x="125" y="870.0" width="9" height="22.0" fill="#0080ff"/>
<rect x="139" y="882.1" width="9" height="9.899999999999977" fill="#0080ff"/>
<rect x="153" y="883.0" width="9" height="9.0" fill="#0080ff"/>
<rect x="167" y="861.0" width="9" height="31.0" fill="#0080ff"/>
<rect x="181" y="850.0" width="9" height="42.0" fill="#0080ff"/>
<rect x="195" y="848.0" width="9" height="44.0" fill="#0080ff"/>
<rect x="209" y="881.0" width="9" height="11.0" fill="#0080ff"/>
<rect x="223" y="891.0" width="9" height="1.0" fill="#0080ff"/>
<rect x="237" y="882.1" width="9" height="9.899999999999977" fill="#0080ff"/>
<rect x="251" y="882.1" width="9" height="9.899999999999977" fill="#0080ff"/>
<rect x="265" y="863.0" width="9" height="29.0" fill="#0080ff"/>
<rect x="279" y="862.2" width="9" height="29.799999999999955" fill="#0080ff"/>
<rect x="293" y="854.0" width="9" height="38.0" fill="#0080ff"/>
<rect x="307" y="881.0" width="9" height="11.0" fill="#0080ff"/>
<rect x="321" y="886.1" width="9" height="5.899999999999977" fill="#0080ff"/>
<rect x="335" y="880.0" width="9" height="12.0" fill="#0080ff"/>
<rect x="349" y="862.2" width="9" height="29.799999999999955" fill="#0080ff"/>
<rect x="363" y="845.0" width="9" height="47.0" fill="#0080ff"/>
<rect x="377" y="854.0" width="9" height="38.0" fill="#0080ff"/>
<rect x="391" y="882.1" width="9" height="9.899999999999977" fill="#0080ff"/>
<rect x="405" y="885.0" width="9" height="7.0" fill="#0080ff"/>
<rect x="419" y="884.0" width="9" height="8.0" fill="#0080ff"/>
<rect x="433" y="858.0" width="9" height="34.0" fill="#0080ff"/>
<rect x="447" y="854.0" width="9" height="38.0" fill="#0080ff"/>
<rect x="461" y="850.0" width="9" height="42.0" fill="#0080ff"/>
<rect x="475" y="881.0" width="9" height="11.0" fill="#0080ff"/>
<rect x="489" y="885.0" width="9" height="7.0" fill="#0080ff"/>
<rect x="503" y="884.0" width="9" height="8.0" fill="#0080ff"/>
<rect x="517" y="852.0" width="9" height="40.0" fill="#0080ff"/>
<rect x="531" y="860.1" width="9" height="31.899999999999977" fill="#0080ff"/>
<rect x="545" y="857.0" width="9" height="35.0" fill="#0080ff"/>
<rect x="559" y="883.0" width="9" height="9.0" fill="#0080ff"/>
<rect x="573" y="885.0" width="9" height="7.0" fill="#0080ff"/>
<rect x="587" y="885.0" width="9" height="7.0" fill="#0080ff"/>
<rect x="601" y="867.0" width="9" height="25.0" fill="#0080ff"/>
<rect x="615" y="860.1" width="9" height="31.899999999999977" fill="#0080ff"/>
<rect x="629" y="854.0" width="9" height="38.0" fill="#0080ff"/>
<rect x="643" y="886.1" width="9" height="5.899999999999977" fill="#0080ff"/>
<rect x="657" y="891.0" width="9" height="1.0" fill="#0080ff"/>
<rect x="671" y="886.1" width="9" height="5.899999999999977" fill="#0080ff"/>
<rect x="685" y="881.0" width="9" height="11.0" fill="#0080ff"/>
<rect x="699" y="876.0" width="9" height="16.0" fill="#0080ff"/>
<rect x="713" y="860.1" width="9" height="31.899999999999977" fill="#0080ff"/>
<rect x="727" y="855.0" width="9" height="37.0" fill="#0080ff"/>
<rect x="741" y="886.1" width="9" height="5.899999999999977" fill="#0080ff"/>
<rect x="755" y="886.1" width="9" height="5.899999999999977" fill="#0080ff"/>
<rect x="769" y="886.1" width="9" height="5.899999999999977" fill="#0080ff"/>
<rect x="783" y="876.0" width="9" height="16.0" fill="#0080ff"/>
<rect x="797" y="851.1" width="9" height="40.89999999999998" fill="#0080ff"/>
<rect x="811" y="850.0" width="9" height="42.0" fill="#0080ff"/>
<rect x="825" y="882.1" width="9" height="9.899999999999977" fill="#0080ff"/>
<rect x="839" y="888.0" width="9" height="4.0" fill="#0080ff"/>
<rect x="853" y="887.0" width="9" height="5.0" fill="#0080ff"/>
<rect x="867" y="874.8" width="9" height="17.200000000000045" fill="#0080ff"/>
<rect x="881" y="870.0" width="9" height="22.0" fill="#0080ff"/>
<rect x="895" y="861.0" width="9" height="31.0" fill="#0080ff"/>
<rect x="909" y="845.0" width="9" height="47.0" fill="#0080ff"/>
<rect x="923" y="883.0" width="9" height="9.0" fill="#0080ff"/>
<rect x="937" y="883.0" width="9" height="9.0" fill="#0080ff"/>
<rect x="951" y="855.0" width="9" height="37.0" fill="#0080ff"/>
<rect x="965" y="840.2" width="9" height="51.799999999999955" fill="#0080ff"/>
<rect x="979" y="848.0" width="9" height="44.0" fill="#0080ff"/>
<rect x="993" y="878.1" width="9" height="13.899999999999977" fill="#0080ff"/>
<rect x="1007" y="885.0" width="9" height="7.0" fill="#0080ff"/>
<rect x="1021" y="881.0" width="9" height="11.0" fill="#0080ff"/>
<rect x="1035" y="838.9" width="9" height="53.10000000000002" fill="#0080ff"/>
<rect x="1049" y="837.0" width="9" height="55.0" fill="#0080ff"/>
<rect x="1063" y="819.0" width="9" height="73.0" fill="#0080ff"/>
<rect x="1077" y="873.9" width="9" height="18.100000000000023" fill="#0080ff"/>
<rect x="1091" y="891.0" width="9" height="1.0" fill="#0080ff"/>
<rect x="1105" y="865.0" width="9" height="27.0" fill="#0080ff"/>
<rect x="1119" y="879.0" width="9" height="13.0" fill="#0080ff"/>
<rect x="1133" y="860.1" width="9" height="31.899999999999977" fill="#0080ff"/>
<rect x="1147" y="857.1" width="9" height="34.89999999999998" fill="#0080ff"/>
<rect x="1161" y="843.1" width="9" height="48.89999999999998" fill="#0080ff"/>
<rect x="1175" y="876.0" width="9" height="16.0" fill="#0080ff"/>
<rect x="1189" y="878.1" width="9" height="13.899999999999977" fill="#0080ff"/>
<rect x="1203" y="875.0" width="9" height="17.0" fill="#0080ff"/>
<rect x="1217" y="865.0" width="9" height="27.0" fill="#0080ff"/>
<rect x="1231" y="860.1" width="9" height="31.899999999999977" fill="#0080ff"/>
<rect x="1245" y="837.0" width="9" height="55.0" fill="#0080ff"/>
<rect x="1259" y="880.2" width="9" height="11.799999999999955" fill="#0080ff"/>
<rect x="1273" y="882.0" width="9" height="10.0" fill="#0080ff"/>
<rect x="1287" y="877.1" width="9" height="14.899999999999977" fill="#0080ff"/>
<rect x="1301" y="864.1" width="9" height="27.899999999999977" fill="#0080ff"/>
<line x1="1845.5" y1="755" x2="1845.5" y2="898" stroke="#333333" stroke-width="1.2"/>
<line x1="1831" y1="892.5" x2="1846" y2="892.5" stroke="#333333" stroke-width="1"/>
<line x1="1841" y1="884.5" x2="1846" y2="884.5" stroke="#333333" stroke-width="1"/>
<line x1="1841" y1="877.5" x2="1846" y2="877.5" stroke="#333333" stroke-width="1"/>
<line x1="1841" y1="869.5" x2="1846" y2="869.5" stroke="#333333" stroke-width="1"/>
<line x1="1841" y1="861.5" x2="1846" y2="861.5" stroke="#333333" stroke-width="1"/>
<line x1="1838" y1="854.5" x2="1846" y2="854.5" stroke="#333333" stroke-width="1"/>
<line x1="1841" y1="846.5" x2="1846" y2="846.5" stroke="#333333" stroke-width="1"/>
<line x1="1841" y1="838.5" x2="1846" y2="838.5" stroke="#333333" stroke-width="1"/>
<line x1="1841" y1="830.5" x2="1846" y2="830.5" stroke="#333333" stroke-width="1"/>
<line x1="1841" y1="823.5" x2="1846" y2="823.5" stroke="#333333" stroke-width="1"/>
<line x1="1831" y1="815.5" x2="1846" y2="815.5" stroke="#333333" stroke-width="1"/>
<line x1="1841" y1="807.5" x2="1846" y2="807.5" stroke="#333333" stroke-width="1"/>
<line x1="1841" y1="800.5" x2="1846" y2="800.5" stroke="#333333" stroke-width="1"/>
<line x1="1841" y1="792.5" x2="1846" y2="792.5" stroke="#333333" stroke-width="1"/>
<line x1="1841" y1="784.5" x2="1846" y2="784.5" stroke="#333333" stroke-width="1"/>
<line x1="1838" y1="777.5" x2="1846" y2="777.5" stroke="#333333" stroke-width="1"/>
<line x1="1841" y1="769.5" x2="1846" y2="769.5" stroke="#333333" stroke-width="1"/>
<line x1="1841" y1="761.5" x2="1846" y2="761.5" stroke="#333333" stroke-width="1"/>
<text x="1849" y="820.5" font-size="12" fill="#000" stroke="#000" stroke-width="0.3">100 000</text>
<text x="1849" y="897" font-size="12" fill="#000" stroke="#000" stroke-width="0.3">0</text>
<text x="1829" y="894.5" font-size="13" text-anchor="end" fill="#3a3a7a" stroke="#3a3a7a" stroke-width="0.3">FXCM Marketscope © 2014</text>
<text x="8" y="47.5" font-size="13" fill="#333388" stroke="#333388" stroke-width="0.3">[Modèle : ichivol]</text>
<text x="8" y="63.5" font-size="13" xml:space="preserve"><tspan fill="#ff0000" stroke="#ff0000" stroke-width="0.3">ICH(EUR/USD, 9, 26, 52) - </tspan><tspan x="171" fill="#ff0000" stroke="#ff0000" stroke-width="0.3">TL: 1,25290</tspan><tspan x="246" fill="#3333ff" stroke="#3333ff" stroke-width="0.3">KL: 1,25355</tspan><tspan x="323" fill="#000000" stroke="#000000" stroke-width="0.3">CS: 1,24974</tspan><tspan x="404" fill="#ff8040" stroke="#ff8040" stroke-width="0.3">SA: 1,25322</tspan><tspan x="484" fill="#1a9ef5" stroke="#1a9ef5" stroke-width="0.3">SB: 1,26048</tspan></text>
</svg>
</body></html>
